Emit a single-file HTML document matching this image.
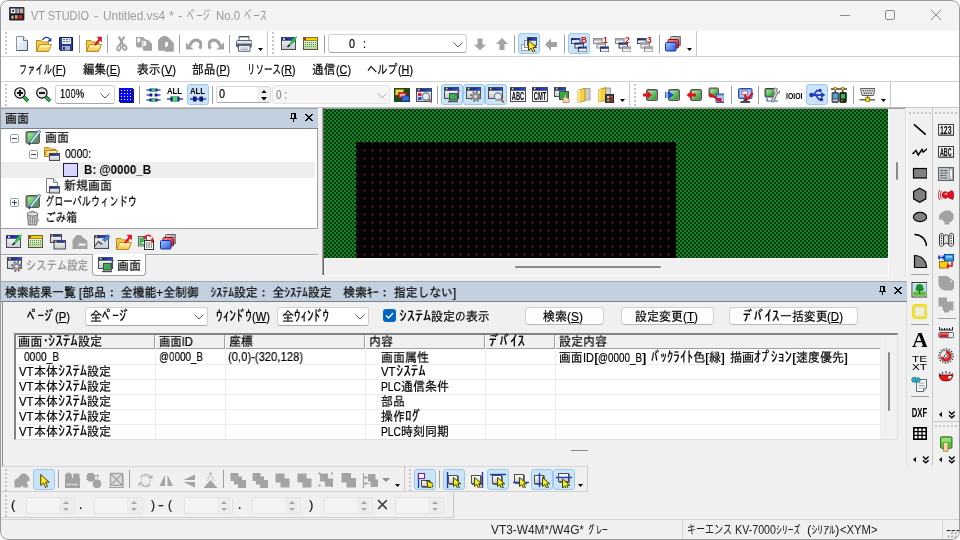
<!DOCTYPE html>
<html lang="ja"><head><meta charset="utf-8"><title>VT STUDIO</title>
<style>
html,body{margin:0;padding:0;background:#fff;}
#w{position:relative;width:960px;height:540px;overflow:hidden;background:#f0f0f0;font-family:"Liberation Sans","IPAGothic",sans-serif;font-size:12px;}
#w div,#w span.t,#w svg.i{position:absolute;box-sizing:border-box;}
#w span.t{white-space:pre;transform-origin:0 0;will-change:transform;}
#w span.s{display:inline-block;vertical-align:top;white-space:pre;}
#w span.s>span{display:inline-block;transform-origin:0 0;white-space:pre;}
#w u{text-decoration:underline;text-underline-offset:1px;}
.hl{background:#cce4f7;border:1px solid #99c9ef;border-radius:3px;}
.sep{background:#a0a0a0;width:1px;}
</style></head><body><svg width="0" height="0" style="position:absolute"><defs>
<linearGradient id="gFold" x1="0" y1="0" x2="0" y2="1"><stop offset="0" stop-color="#fff8c0"/><stop offset="1" stop-color="#f0c040"/></linearGradient>
<linearGradient id="gDoc" x1="0" y1="0" x2="1" y2="1"><stop offset="0" stop-color="#ffffff"/><stop offset="1" stop-color="#c8d8ec"/></linearGradient>
<linearGradient id="gWin" x1="0" y1="0" x2="0" y2="1"><stop offset="0" stop-color="#ffffff"/><stop offset="1" stop-color="#c4c8cc"/></linearGradient>
<linearGradient id="gNavy" x1="0" y1="0" x2="1" y2="0"><stop offset="0" stop-color="#0a1a7a"/><stop offset="1" stop-color="#2a50c8"/></linearGradient>
<linearGradient id="gGreen" x1="0" y1="0" x2="1" y2="1"><stop offset="0" stop-color="#b8f0a0"/><stop offset="1" stop-color="#18a028"/></linearGradient>
<linearGradient id="gBlue" x1="0" y1="0" x2="1" y2="1"><stop offset="0" stop-color="#a8c8ff"/><stop offset="1" stop-color="#2858d8"/></linearGradient>
<linearGradient id="gRed" x1="0" y1="0" x2="1" y2="1"><stop offset="0" stop-color="#ff9090"/><stop offset="1" stop-color="#d01028"/></linearGradient>
<linearGradient id="gGray" x1="0" y1="0" x2="1" y2="1"><stop offset="0" stop-color="#d8d8d8"/><stop offset="1" stop-color="#808080"/></linearGradient>
<linearGradient id="gCalBody" x1="0" y1="0" x2="0" y2="1"><stop offset="0" stop-color="#f4fae8"/><stop offset="1" stop-color="#b8d8a0"/></linearGradient>
</defs></svg><div id="w">
<div style="left:0px;top:0px;width:960px;height:30px;background:#f3f3f3;"></div>
<div style="left:0px;top:30px;width:960px;height:78px;background:#fff;"></div>
<div style="left:0px;top:30px;width:960px;height:1px;background:#f9f9f9;"></div>
<div style="left:0px;top:56px;width:960px;height:1px;background:#d0d0d0;"></div>
<div style="left:0px;top:81px;width:960px;height:1px;background:#d0d0d0;"></div>
<div style="left:0px;top:107px;width:960px;height:1px;background:#c8c8c8;"></div>
<svg class="i" style="left:9.3px;top:7px;" width="15.5" height="13.5" viewBox="0 0 17 15"><rect x="0" y="0" width="17" height="15" rx="1" fill="#2a2e3a"/><rect x="1" y="1" width="15" height="6.5" fill="#3a4254"/><rect x="2" y="1.8" width="5" height="5" fill="#f4f4f4"/><rect x="3.5" y="3.2" width="2" height="2.2" fill="#181818"/><rect x="8.2" y="1.8" width="3" height="5" fill="#9ab4c8"/><rect x="12" y="1.8" width="3.5" height="5" fill="#c8a890"/><rect x="1" y="8" width="15" height="6" fill="#14141a"/><rect x="2.5" y="9.5" width="2.5" height="3.5" fill="#c8c0b0"/><rect x="6.5" y="9" width="3" height="4" fill="#e09848"/><rect x="10.5" y="9" width="4" height="4" fill="#c82830"/></svg>
<span class="t" style="left:31px;top:9.5px;line-height:12.5px;height:12.5px;color:#9b9b9b;font-family:'Liberation Sans','Noto Sans CJK JP',sans-serif;font-size:12.5px;font-weight:normal;"><span class="s" style="width:58px"><span style="transform:scaleX(0.8728);">VT STUDIO</span></span><span class="s" style="width:4.5px"><span style=""> </span></span><span class="s" style="width:4.5px"><span style="transform:scaleX(1.0787);">-</span></span><span class="s" style="width:4.5px"><span style=""> </span></span><span class="s" style="width:62px"><span style="transform:scaleX(0.9493);">Untitled.vs4</span></span><span class="s" style="width:4.5px"><span style=""> </span></span><span class="s" style="width:5px"><span style="transform:scaleX(1.0256);">*</span></span><span class="s" style="width:4px"><span style=""> </span></span><span class="s" style="width:4.5px"><span style="transform:scaleX(1.0787);">-</span></span><span class="s" style="width:4px"><span style=""> </span></span><span class="s" style="width:25px"><span style="transform:scaleX(1.0499);">ﾍ<span style="margin-left:-0.2em;margin-right:-0.1em">ﾟ</span>ｰｼ<span style="margin-left:-0.2em;margin-right:-0.1em">ﾞ</span></span></span><span class="s" style="width:4px"><span style=""> </span></span><span class="s" style="width:24px"><span style="transform:scaleX(0.9089);">No.0</span></span><span class="s" style="width:4.5px"><span style=""> </span></span><span class="s" style="width:22.5px"><span style="transform:scaleX(1.0565);">ﾍ<span style="margin-left:-0.2em;margin-right:-0.1em">ﾞ</span>ｰｽ</span></span></span>
<div style="left:840px;top:15px;width:10px;height:1px;background:#8a8a8a;"></div>
<svg class="i" style="left:884px;top:9px;" width="12" height="12" viewBox="0 0 12 12"><rect x="1.5" y="1.5" width="9" height="9" rx="1.5" fill="none" stroke="#8a8a8a" stroke-width="1"/></svg>
<svg class="i" style="left:930px;top:9px;" width="12" height="12" viewBox="0 0 12 12"><path d="M1 1L11 11M11 1L1 11" stroke="#8a8a8a" stroke-width="1"/></svg>
<div style="left:5px;top:32px;width:2px;height:2px;background:#c6c6c6;"></div>
<div style="left:5px;top:36px;width:2px;height:2px;background:#c6c6c6;"></div>
<div style="left:5px;top:40px;width:2px;height:2px;background:#c6c6c6;"></div>
<div style="left:5px;top:44px;width:2px;height:2px;background:#c6c6c6;"></div>
<div style="left:5px;top:48px;width:2px;height:2px;background:#c6c6c6;"></div>
<div style="left:5px;top:52px;width:2px;height:2px;background:#c6c6c6;"></div>
<svg class="i" style="left:14px;top:36px;" width="16" height="16" viewBox="0 0 16 16"><path d="M2.5 0.5H9.5L13.5 4.5V14.5H2.5Z" fill="url(#gDoc)" stroke="#8c92a0"/><path d="M9.5 0.5V4.5H13.5" fill="#e8eef8" stroke="#70788a"/><path d="M2.5 14.5H13.5V5" fill="none" stroke="#505868" stroke-width="1"/></svg>
<svg class="i" style="left:36px;top:36px;" width="16" height="16" viewBox="0 0 16 16"><g transform="translate(0,1)"><path d="M0.5 14.5V3.5H5L6.5 5H12.5V7.5" fill="#f4cc48" stroke="#b88c20"/><path d="M0.5 14.5L3.5 7.5H15.5L12.5 14.5Z" fill="url(#gFold)" stroke="#b88c20"/></g><path d="M6.5 4C8 1 11.5 0.5 13.5 3" fill="none" stroke="#1838a0" stroke-width="1.3"/><path d="M15.3 1.5V5.5H11.3Z" fill="#1838a0"/></svg>
<svg class="i" style="left:58px;top:36px;" width="16" height="16" viewBox="0 0 16 16"><path d="M1.5 1.5H14.5V14.5H2.5L1.5 13.5Z" fill="#2a3a90" stroke="#101860"/><rect x="4" y="2" width="9" height="6" fill="#e8ecf0"/><path d="M5 3.5H12M5 5.5H12" stroke="#687088" stroke-width="1" stroke-dasharray="2 1"/><rect x="4" y="10" width="8" height="4.5" fill="#a8b0c0"/><rect x="5" y="11" width="2" height="3" fill="#2a3a90"/></svg>
<div style="left:79px;top:35px;width:1px;height:18px;background:#a0a0a0;"></div>
<svg class="i" style="left:86px;top:36px;" width="16" height="16" viewBox="0 0 16 16"><g transform="translate(0,1)"><path d="M0.5 14.5V3.5H5L6.5 5H12.5V7.5" fill="#f4cc48" stroke="#b88c20"/><path d="M0.5 14.5L3.5 7.5H15.5L12.5 14.5Z" fill="url(#gFold)" stroke="#b88c20"/></g><path d="M9 9L13.5 3.5" stroke="#e01020" stroke-width="2"/><path d="M10.5 0.8H15.8V6.5Z" fill="#e01020"/></svg>
<div style="left:107px;top:35px;width:1px;height:18px;background:#a0a0a0;"></div>
<svg class="i" style="left:114px;top:36px;" width="16" height="16" viewBox="0 0 16 16"><path d="M4.8 0.5L9.8 10M10.2 0.5L5.2 10" stroke="#a3a3a3" stroke-width="2.2" fill="none"/><ellipse cx="5" cy="12" rx="1.6" ry="2.6" fill="none" stroke="#a3a3a3" stroke-width="1.8" transform="rotate(15 5 12)"/><ellipse cx="10.6" cy="11.6" rx="1.8" ry="2.4" fill="none" stroke="#a3a3a3" stroke-width="1.8" transform="rotate(-25 10.6 11.6)"/></svg>
<svg class="i" style="left:136px;top:36px;" width="16" height="16" viewBox="0 0 16 16"><path d="M0 1H7L10 4V10L8 11.5H1.5L0 10Z" fill="#a3a3a3"/><path d="M1.2 2H4.2V6L1.2 6.5Z" fill="#f4f4f4"/><path d="M6.3 3.7H12L16 7.7V14.7H7.5L6.3 13Z" fill="#a3a3a3"/><path d="M6.3 3.7V13L7.5 14.7" stroke="#fff" stroke-width="0.7" fill="none"/><path d="M7.3 5H10.3V9.2L7.3 10.5Z" fill="#f4f4f4"/></svg>
<svg class="i" style="left:158px;top:36px;" width="16" height="16" viewBox="0 0 16 16"><path d="M0 4L3 1L5.5 0H8L10.5 1.5L15.8 7V15.7H7.5L6.5 14.7H1L0 13.5Z" fill="#a3a3a3"/><path d="M7 6H10V10L7 11.2Z" fill="#f4f4f4"/></svg>
<div style="left:179px;top:35px;width:1px;height:18px;background:#a0a0a0;"></div>
<svg class="i" style="left:186px;top:36px;" width="16" height="16" viewBox="0 0 16 16"><path d="M13.6 12.6C16.2 9 15 4.2 10 4.2C7 4.2 5 6.5 3.6 10" fill="none" stroke="#a3a3a3" stroke-width="3.2"/><path d="M0 6.5V13.6H7.6Z" fill="#a3a3a3"/></svg>
<svg class="i" style="left:208px;top:36px;" width="16" height="16" viewBox="0 0 16 16"><g transform="translate(16,0) scale(-1,1)"><path d="M13.6 12.6C16.2 9 15 4.2 10 4.2C7 4.2 5 6.5 3.6 10" fill="none" stroke="#a3a3a3" stroke-width="3.2"/><path d="M0 6.5V13.6H7.6Z" fill="#a3a3a3"/></g></svg>
<div style="left:229px;top:35px;width:1px;height:18px;background:#a0a0a0;"></div>
<svg class="i" style="left:236px;top:36px;" width="16" height="16" viewBox="0 0 16 16"><path d="M3 0.5H13V4.5H3Z" fill="#fafcff" stroke="#586070"/><path d="M3 0.8H13" stroke="#384048" stroke-width="1"/><rect x="0.5" y="4.5" width="15.5" height="6.5" rx="1" fill="#dfe6ee" stroke="#5c6878"/><rect x="1" y="7.5" width="14.5" height="3.5" fill="#566274"/><path d="M2.5 9.5H14V15.3H2.5Z" fill="#f4f6fa" stroke="#586070"/><path d="M4.5 12H12M4.5 13.6H12" stroke="#a0a8b4" stroke-width="0.9"/></svg>
<svg class="i" style="left:258px;top:48px;" width="5" height="3" viewBox="0 0 5 3"><path d="M0 0H5L2.5 3Z" fill="#000"/></svg>
<div style="left:267px;top:31px;width:1px;height:26px;background:#c8c8c8;"></div>
<div style="left:272px;top:32px;width:2px;height:2px;background:#c6c6c6;"></div>
<div style="left:272px;top:36px;width:2px;height:2px;background:#c6c6c6;"></div>
<div style="left:272px;top:40px;width:2px;height:2px;background:#c6c6c6;"></div>
<div style="left:272px;top:44px;width:2px;height:2px;background:#c6c6c6;"></div>
<div style="left:272px;top:48px;width:2px;height:2px;background:#c6c6c6;"></div>
<div style="left:272px;top:52px;width:2px;height:2px;background:#c6c6c6;"></div>
<svg class="i" style="left:281px;top:36px;" width="16" height="16" viewBox="0 0 16 16"><rect x="0.5" y="1.5" width="14" height="12" fill="url(#gWin)" stroke="#484c58"/><rect x="0.5" y="1.5" width="14" height="3" fill="url(#gNavy)" stroke="#484c58" stroke-width="0.6"/><rect x="2" y="2.2" width="2" height="1.6" fill="#e8e8ff"/><path d="M16 0L14.5 5L9.5 9.5L8 8.5L11.5 3Z" fill="#18a838"/><path d="M16 0L12 5L9 9" stroke="#70e088" stroke-width="0.8" fill="none"/><path d="M8.8 8.8L6.5 11" stroke="#101010" stroke-width="1.6"/></svg>
<svg class="i" style="left:303px;top:36px;" width="16" height="16" viewBox="0 0 16 16"><rect x="0.5" y="1.5" width="14" height="12" fill="url(#gCalBody)" stroke="#5c5430"/><rect x="0.5" y="1.5" width="14" height="3" fill="#f4d400" stroke="#5c5430" stroke-width="0.6"/><rect x="1" y="2" width="2" height="2" fill="#b03000"/><g shape-rendering="crispEdges"><rect x="2" y="6" width="1" height="1" fill="#4c9040"/><rect x="4" y="6" width="1" height="1" fill="#4c9040"/><rect x="6" y="6" width="1" height="1" fill="#4c9040"/><rect x="8" y="6" width="1" height="1" fill="#4c9040"/><rect x="10" y="6" width="1" height="1" fill="#4c9040"/><rect x="12" y="6" width="1" height="1" fill="#4c9040"/><rect x="2" y="8" width="1" height="1" fill="#4c9040"/><rect x="4" y="8" width="1" height="1" fill="#4c9040"/><rect x="6" y="8" width="1" height="1" fill="#4c9040"/><rect x="8" y="8" width="1" height="1" fill="#4c9040"/><rect x="10" y="8" width="1" height="1" fill="#4c9040"/><rect x="12" y="8" width="1" height="1" fill="#4c9040"/><rect x="2" y="10" width="1" height="1" fill="#4c9040"/><rect x="4" y="10" width="1" height="1" fill="#4c9040"/><rect x="6" y="10" width="1" height="1" fill="#4c9040"/><rect x="8" y="10" width="1" height="1" fill="#4c9040"/><rect x="10" y="10" width="1" height="1" fill="#4c9040"/><rect x="12" y="10" width="1" height="1" fill="#4c9040"/></g></svg>
<div style="left:324px;top:35px;width:1px;height:18px;background:#a0a0a0;"></div>
<div style="left:328px;top:34px;width:139px;height:19px;background:#fff;border:1px solid #d0d0d0;border-bottom-color:#a8a8a8;border-radius:3px;"></div>
<span class="t" style="left:349px;top:36.7px;line-height:13px;height:13px;color:#000;font-family:'Liberation Sans','IPAGothic',sans-serif;font-size:13px;font-weight:normal;-webkit-text-stroke:0.2px currentColor;"><span class="s" style="width:6px"><span style="transform:scaleX(0.8294);">0</span></span><span class="s" style="width:7.5px"><span style=""> </span></span><span class="s" style="width:3px"><span style="transform:scaleX(0.8276);">:</span></span></span>
<svg class="i" style="left:453px;top:42px;" width="10" height="6" viewBox="0 0 10 6"><path d="M0.5 0.5L5 5L9.5 0.5" fill="none" stroke="#5a5a5a" stroke-width="1"/></svg>
<svg class="i" style="left:472px;top:36px;" width="16" height="16" viewBox="0 0 16 16"><g transform="translate(1,2.5)"><path d="M4.5 0H9.5V6H13L7 12L1 6H4.5Z" fill="#a3a3a3"/></g></svg>
<svg class="i" style="left:494px;top:36px;" width="16" height="16" viewBox="0 0 16 16"><g transform="translate(1,14) scale(1,-1)"><path d="M4.5 0H9.5V6H13L7 12L1 6H4.5Z" fill="#a3a3a3"/></g></svg>
<div style="left:514px;top:35px;width:1px;height:18px;background:#a0a0a0;"></div>
<div class="hl" style="left:518px;top:33px;width:22px;height:21px;"></div>
<svg class="i" style="left:521px;top:36px;" width="16" height="16" viewBox="0 0 16 16"><rect x="0.5" y="8.5" width="8" height="6" fill="#fff" stroke="#a0a0a8"/><rect x="3.5" y="4.5" width="8" height="7" fill="#eef" stroke="#8088a0"/><rect x="6.5" y="1.5" width="9" height="8" fill="url(#gWin)" stroke="#484c58"/><rect x="6.5" y="1.5" width="9" height="3" fill="url(#gNavy)" stroke="#484c58" stroke-width="0.6"/><g transform="translate(7,4)"><path d="M0.5 0.5V10.5L3 8.2L5 12.5L7 11.5L5 7.5H8.5Z" fill="#ffe820" stroke="#3a3000" stroke-width="0.9" stroke-linejoin="round"/></g></svg>
<svg class="i" style="left:543px;top:36px;" width="16" height="16" viewBox="0 0 16 16"><g transform="translate(14,1.5) rotate(90)"><path d="M4.5 0H9.5V6H13L7 12L1 6H4.5Z" fill="#a3a3a3"/></g></svg>
<div style="left:564px;top:35px;width:1px;height:18px;background:#a0a0a0;"></div>
<div class="hl" style="left:568px;top:33px;width:22px;height:21px;"></div>
<svg class="i" style="left:571px;top:36px;will-change:transform;" width="16" height="16" viewBox="0 0 16 16"><rect x="0.5" y="2.5" width="8.5" height="5" fill="#eceef2" stroke="#404858"/><rect x="0.5" y="2.5" width="8.5" height="1.6" fill="url(#gNavy)"/><rect x="4.0" y="7.0" width="8.5" height="5" fill="#eceef2" stroke="#404858"/><rect x="4.0" y="7.0" width="8.5" height="1.6" fill="url(#gNavy)"/><rect x="7.5" y="11.0" width="8.5" height="5" fill="#eceef2" stroke="#404858"/><rect x="7.5" y="11.0" width="8.5" height="1.6" fill="url(#gNavy)"/><text x="10" y="7" font-family="Liberation Sans,sans-serif" font-weight="bold" font-size="8.5" fill="#d01818">B</text></svg>
<svg class="i" style="left:593px;top:36px;will-change:transform;" width="16" height="16" viewBox="0 0 16 16"><rect x="0.5" y="2.5" width="8.5" height="5" fill="#eceef2" stroke="#888"/><rect x="0.5" y="2.5" width="8.5" height="1.6" fill="#b0b0b0" stroke="#888" stroke-width="0.5"/><rect x="4.0" y="7.0" width="8.5" height="5" fill="#eceef2" stroke="#888"/><rect x="4.0" y="7.0" width="8.5" height="1.6" fill="#b0b0b0" stroke="#888" stroke-width="0.5"/><rect x="7.5" y="11.0" width="8.5" height="5" fill="#eceef2" stroke="#404858"/><rect x="7.5" y="11.0" width="8.5" height="1.6" fill="url(#gNavy)" stroke="#404858" stroke-width="0.5"/><text x="10" y="7" font-family="Liberation Sans,sans-serif" font-weight="bold" font-size="8.5" fill="#d01818">1</text></svg>
<svg class="i" style="left:615px;top:36px;will-change:transform;" width="16" height="16" viewBox="0 0 16 16"><rect x="0.5" y="2.5" width="8.5" height="5" fill="#eceef2" stroke="#888"/><rect x="0.5" y="2.5" width="8.5" height="1.6" fill="#b0b0b0" stroke="#888" stroke-width="0.5"/><rect x="4.0" y="7.0" width="8.5" height="5" fill="#eceef2" stroke="#404858"/><rect x="4.0" y="7.0" width="8.5" height="1.6" fill="url(#gNavy)" stroke="#404858" stroke-width="0.5"/><rect x="7.5" y="11.0" width="8.5" height="5" fill="#eceef2" stroke="#888"/><rect x="7.5" y="11.0" width="8.5" height="1.6" fill="#b0b0b0" stroke="#888" stroke-width="0.5"/><text x="10" y="7" font-family="Liberation Sans,sans-serif" font-weight="bold" font-size="8.5" fill="#d01818">2</text></svg>
<svg class="i" style="left:637px;top:36px;will-change:transform;" width="16" height="16" viewBox="0 0 16 16"><rect x="0.5" y="2.5" width="8.5" height="5" fill="#eceef2" stroke="#404858"/><rect x="0.5" y="2.5" width="8.5" height="1.6" fill="url(#gNavy)" stroke="#404858" stroke-width="0.5"/><rect x="4.0" y="7.0" width="8.5" height="5" fill="#eceef2" stroke="#888"/><rect x="4.0" y="7.0" width="8.5" height="1.6" fill="#b0b0b0" stroke="#888" stroke-width="0.5"/><rect x="7.5" y="11.0" width="8.5" height="5" fill="#eceef2" stroke="#888"/><rect x="7.5" y="11.0" width="8.5" height="1.6" fill="#b0b0b0" stroke="#888" stroke-width="0.5"/><text x="10" y="7" font-family="Liberation Sans,sans-serif" font-weight="bold" font-size="8.5" fill="#d01818">3</text></svg>
<div style="left:659px;top:35px;width:1px;height:18px;background:#a0a0a0;"></div>
<svg class="i" style="left:665px;top:36px;" width="16" height="16" viewBox="0 0 16 16"><rect x="5.5" y="0.5" width="10.5" height="9" rx="1" fill="url(#gGray)" stroke="#606060"/><rect x="3" y="3.5" width="10.5" height="8.5" rx="1" fill="url(#gRed)" stroke="#901020"/><rect x="0.5" y="6.5" width="10.5" height="8.5" rx="1" fill="url(#gBlue)" stroke="#1830a0"/></svg>
<svg class="i" style="left:687px;top:48px;" width="5" height="3" viewBox="0 0 5 3"><path d="M0 0H5L2.5 3Z" fill="#000"/></svg>
<div style="left:696px;top:31px;width:1px;height:26px;background:#c8c8c8;"></div>
<span class="t" style="left:19px;top:62.5px;line-height:13px;height:13px;color:#000;font-family:'Liberation Sans','IPAGothic',sans-serif;font-size:13px;font-weight:normal;-webkit-text-stroke:0.2px currentColor;"><span class="s" style="width:33px"><span style="transform:scaleX(0.6346);">ファイル</span></span><span class="s" style="width:14px"><span style="transform:scaleX(0.8413);">(<u>F</u>)</span></span></span>
<span class="t" style="left:83px;top:62.5px;line-height:13px;height:13px;color:#000;font-family:'Liberation Sans','IPAGothic',sans-serif;font-size:13px;font-weight:normal;-webkit-text-stroke:0.2px currentColor;"><span class="s" style="width:23px"><span style="transform:scaleX(0.8846);">編集</span></span><span class="s" style="width:14.5px"><span style="transform:scaleX(0.8353);">(<u>E</u>)</span></span></span>
<span class="t" style="left:137px;top:62.5px;line-height:13px;height:13px;color:#000;font-family:'Liberation Sans','IPAGothic',sans-serif;font-size:13px;font-weight:normal;-webkit-text-stroke:0.2px currentColor;"><span class="s" style="width:23.5px"><span style="transform:scaleX(0.9038);">表示</span></span><span class="s" style="width:15px"><span style="transform:scaleX(0.8641);">(<u>V</u>)</span></span></span>
<span class="t" style="left:192px;top:62.5px;line-height:13px;height:13px;color:#000;font-family:'Liberation Sans','IPAGothic',sans-serif;font-size:13px;font-weight:normal;-webkit-text-stroke:0.2px currentColor;"><span class="s" style="width:23.5px"><span style="transform:scaleX(0.9038);">部品</span></span><span class="s" style="width:14px"><span style="transform:scaleX(0.8065);">(<u>P</u>)</span></span></span>
<span class="t" style="left:247px;top:62.5px;line-height:13px;height:13px;color:#000;font-family:'Liberation Sans','IPAGothic',sans-serif;font-size:13px;font-weight:normal;-webkit-text-stroke:0.2px currentColor;"><span class="s" style="width:34px"><span style="transform:scaleX(0.6538);">リソース</span></span><span class="s" style="width:14.5px"><span style="transform:scaleX(0.8021);">(<u>R</u>)</span></span></span>
<span class="t" style="left:312px;top:62.5px;line-height:13px;height:13px;color:#000;font-family:'Liberation Sans','IPAGothic',sans-serif;font-size:13px;font-weight:normal;-webkit-text-stroke:0.2px currentColor;"><span class="s" style="width:23.5px"><span style="transform:scaleX(0.9038);">通信</span></span><span class="s" style="width:15px"><span style="transform:scaleX(0.8297);">(<u>C</u>)</span></span></span>
<span class="t" style="left:367px;top:62.5px;line-height:13px;height:13px;color:#000;font-family:'Liberation Sans','IPAGothic',sans-serif;font-size:13px;font-weight:normal;-webkit-text-stroke:0.2px currentColor;"><span class="s" style="width:30.5px"><span style="transform:scaleX(0.7821);">ヘルプ</span></span><span class="s" style="width:15px"><span style="transform:scaleX(0.8297);">(<u>H</u>)</span></span></span>
<div style="left:5px;top:84px;width:2px;height:2px;background:#c6c6c6;"></div>
<div style="left:5px;top:88px;width:2px;height:2px;background:#c6c6c6;"></div>
<div style="left:5px;top:92px;width:2px;height:2px;background:#c6c6c6;"></div>
<div style="left:5px;top:96px;width:2px;height:2px;background:#c6c6c6;"></div>
<div style="left:5px;top:100px;width:2px;height:2px;background:#c6c6c6;"></div>
<div style="left:5px;top:104px;width:2px;height:2px;background:#c6c6c6;"></div>
<svg class="i" style="left:14px;top:87px;" width="16" height="16" viewBox="0 0 16 16"><path d="M10 10L14 14" stroke="#0a5010" stroke-width="3.6" stroke-linecap="butt"/><path d="M10.3 10.3L13.7 13.7" stroke="#28c040" stroke-width="2"/><circle cx="5.9" cy="5.9" r="5.2" fill="#e4e4e4" stroke="#000" stroke-width="1.1"/><path d="M3 6H9" stroke="#000" stroke-width="1.8"/><path d="M6 3V9" stroke="#000" stroke-width="1.8"/></svg>
<svg class="i" style="left:36px;top:87px;" width="16" height="16" viewBox="0 0 16 16"><path d="M10 10L14 14" stroke="#0a5010" stroke-width="3.6" stroke-linecap="butt"/><path d="M10.3 10.3L13.7 13.7" stroke="#28c040" stroke-width="2"/><circle cx="5.9" cy="5.9" r="5.2" fill="#e4e4e4" stroke="#000" stroke-width="1.1"/><path d="M3 6H9" stroke="#000" stroke-width="1.8"/></svg>
<div style="left:55px;top:85px;width:60px;height:19px;background:#fff;border:1px solid #d0d0d0;border-bottom-color:#a8a8a8;border-radius:3px;"></div>
<span class="t" style="left:60px;top:87.0px;line-height:13px;color:#000;font-family:'Liberation Sans','IPAGothic',sans-serif;font-size:13px;font-weight:normal;-webkit-text-stroke:0.2px currentColor;transform:scaleX(0.7218);">100%</span>
<svg class="i" style="left:100px;top:93px;" width="10" height="6" viewBox="0 0 10 6"><path d="M0.5 0.5L5 5L9.5 0.5" fill="none" stroke="#5a5a5a" stroke-width="1"/></svg>
<svg class="i" style="left:119px;top:87px;" width="16" height="16" viewBox="0 0 16 16"><g shape-rendering="crispEdges"><rect x="1" y="2" width="14" height="14" fill="#181838"/><rect x="0" y="1" width="14" height="14" fill="#0808e8"/><rect x="2" y="3" width="1" height="1" fill="#fff"/><rect x="2" y="6" width="1" height="1" fill="#fff"/><rect x="2" y="9" width="1" height="1" fill="#fff"/><rect x="2" y="12" width="1" height="1" fill="#fff"/><rect x="5" y="3" width="1" height="1" fill="#fff"/><rect x="5" y="6" width="1" height="1" fill="#fff"/><rect x="5" y="9" width="1" height="1" fill="#fff"/><rect x="5" y="12" width="1" height="1" fill="#fff"/><rect x="8" y="3" width="1" height="1" fill="#fff"/><rect x="8" y="6" width="1" height="1" fill="#fff"/><rect x="8" y="9" width="1" height="1" fill="#fff"/><rect x="8" y="12" width="1" height="1" fill="#fff"/><rect x="11" y="3" width="1" height="1" fill="#fff"/><rect x="11" y="6" width="1" height="1" fill="#fff"/><rect x="11" y="9" width="1" height="1" fill="#fff"/><rect x="11" y="12" width="1" height="1" fill="#fff"/></g></svg>
<div style="left:139px;top:86px;width:1px;height:18px;background:#a0a0a0;"></div>
<svg class="i" style="left:145px;top:87px;" width="16" height="16" viewBox="0 0 16 16"><g transform="translate(0.5,0)"><path d="M1 3H15" stroke="#1020c0" stroke-width="1.2"/><rect x="4" y="1.5" width="8" height="3" fill="#102090"/><rect x="6" y="1.5" width="4" height="3" fill="#40d060"/><path d="M1 8H15" stroke="#1020c0" stroke-width="1.2"/><rect x="4" y="6.5" width="3" height="3" fill="#102090"/><rect x="9" y="6.5" width="3" height="3" fill="#102090"/><rect x="7" y="6.5" width="2" height="3" fill="#fff"/><path d="M1 13H15" stroke="#1020c0" stroke-width="1.2"/><rect x="4" y="11.5" width="8" height="3" fill="#102090"/><rect x="6" y="11.5" width="4" height="3" fill="#40d060"/></g></svg>
<svg class="i" style="left:167px;top:87px;will-change:transform;" width="16" height="16" viewBox="0 0 16 16"><text x="0" y="7" font-family="Liberation Sans,sans-serif" font-weight="bold" font-size="8.2" fill="#000" textLength="15" lengthAdjust="spacingAndGlyphs">ALL</text><path d="M0 12H16" stroke="#1020c0" stroke-width="1.3"/><rect x="3.5" y="9.5" width="9" height="5" fill="#102080"/><rect x="5.5" y="9.5" width="5" height="5" fill="#48d868"/></svg>
<div class="hl" style="left:187px;top:84px;width:22px;height:21px;"></div>
<svg class="i" style="left:190px;top:87px;will-change:transform;" width="16" height="16" viewBox="0 0 16 16"><text x="0" y="7" font-family="Liberation Sans,sans-serif" font-weight="bold" font-size="8.2" fill="#000" textLength="15" lengthAdjust="spacingAndGlyphs">ALL</text><path d="M0 12H16" stroke="#1020c0" stroke-width="1.3"/><rect x="3" y="9.5" width="3.6" height="5" fill="#101878"/><rect x="9.4" y="9.5" width="3.6" height="5" fill="#101878"/></svg>
<div style="left:212px;top:86px;width:1px;height:18px;background:#a0a0a0;"></div>
<div style="left:216px;top:86px;width:55px;height:17px;background:#fff;border:1px solid #d8d8d8;border-bottom-color:#a8a8a8;border-radius:3px;"></div>
<span class="t" style="left:219px;top:87.0px;line-height:13px;color:#000;font-family:'Liberation Sans','IPAGothic',sans-serif;font-size:13px;font-weight:normal;-webkit-text-stroke:0.2px currentColor;transform:scaleX(0.8294);">0</span>
<div style="left:257px;top:87px;width:13px;height:15px;background:#f0f0f0;"></div>
<svg class="i" style="left:261px;top:89.5px;" width="6" height="3.5" viewBox="0 0 6 3.5"><path d="M0 3.5H6L3 0Z" fill="#000"/></svg>
<svg class="i" style="left:261px;top:97px;" width="6" height="3.5" viewBox="0 0 6 3.5"><path d="M0 0H6L3 3.5Z" fill="#000"/></svg>
<div style="left:272px;top:85px;width:118px;height:19px;background:#f6f6f6;border:1px solid #e4e4e4;border-radius:3px;"></div>
<span class="t" style="left:276px;top:89.0px;line-height:12px;color:#8c8c8c;font-family:'Liberation Sans','IPAGothic',sans-serif;font-size:12px;font-weight:normal;-webkit-text-stroke:0.2px currentColor;transform:scaleX(0.8244);">0 :</span>
<svg class="i" style="left:377px;top:93px;" width="10" height="6" viewBox="0 0 10 6"><path d="M0.5 0.5L5 5L9.5 0.5" fill="none" stroke="#b0b0b0" stroke-width="1"/></svg>
<svg class="i" style="left:394px;top:87px;" width="16" height="16" viewBox="0 0 16 16"><rect x="0" y="1" width="16" height="14" fill="#1a4a1a"/><rect x="1.5" y="2.5" width="8" height="5.5" fill="#e8e030" stroke="#a09010" stroke-width="0.6"/><rect x="4.5" y="5.5" width="8" height="5.5" fill="#e82838" stroke="#901018" stroke-width="0.6"/><rect x="6" y="7" width="5" height="2.5" fill="#f8b0b0"/><rect x="8" y="9" width="7" height="5" fill="#3868e0" stroke="#1830a0" stroke-width="0.6"/></svg>
<svg class="i" style="left:416px;top:87px;" width="16" height="16" viewBox="0 0 16 16"><rect x="0.5" y="1.5" width="15" height="13" fill="url(#gWin)" stroke="#484c58"/><rect x="0.5" y="1.5" width="15" height="3" fill="url(#gNavy)" stroke="#484c58" stroke-width="0.6"/><rect x="1.8" y="1.8" width="1.8" height="1.8" fill="#f0d040"/><rect x="2" y="6" width="3.5" height="3" fill="#e02030"/><rect x="2" y="10" width="3.5" height="3" fill="#2850d8"/><g transform="translate(1.5,1)"><path d="M10.5 10.5L14.5 14.5" stroke="#a06850" stroke-width="2"/><circle cx="8.5" cy="8.5" r="3.6" fill="#e0ecf4" fill-opacity="0.9" stroke="#788088" stroke-width="1.2"/></g></svg>
<div style="left:437px;top:86px;width:1px;height:18px;background:#a0a0a0;"></div>
<div class="hl" style="left:441px;top:84px;width:22px;height:21px;"></div>
<div class="hl" style="left:463px;top:84px;width:22px;height:21px;"></div>
<div class="hl" style="left:485px;top:84px;width:22px;height:21px;"></div>
<svg class="i" style="left:444px;top:87px;" width="16" height="16" viewBox="0 0 16 16"><rect x="0.5" y="0.5" width="14" height="11" fill="url(#gWin)" stroke="#484c58"/><rect x="0.5" y="0.5" width="14" height="3" fill="url(#gNavy)" stroke="#484c58" stroke-width="0.6"/><rect x="1.8" y="0.8" width="1.8" height="1.8" fill="#f0d040"/><rect x="5.5" y="6.5" width="8" height="6.5" fill="#30b848" stroke="#404840"/><path d="M4 14.5H14" stroke="#505050" stroke-width="1.4"/><path d="M15.5 3L11 11L9.5 12.5L10 10.5Z" fill="#c0d8f0" stroke="#405878" stroke-width="0.7"/></svg>
<svg class="i" style="left:466px;top:87px;" width="16" height="16" viewBox="0 0 16 16"><rect x="0.5" y="0.5" width="14" height="11" fill="url(#gWin)" stroke="#484c58"/><rect x="0.5" y="0.5" width="14" height="3" fill="url(#gNavy)" stroke="#484c58" stroke-width="0.6"/><rect x="1.8" y="0.8" width="1.8" height="1.8" fill="#f0d040"/><circle cx="9.5" cy="9.5" r="4.3" fill="none" stroke="#707070" stroke-width="2.4" stroke-dasharray="1.9 1.48"/><circle cx="9.5" cy="9.5" r="3.6" fill="#8c8c8c"/><circle cx="9.5" cy="9.5" r="1.4" fill="#ececec"/></svg>
<svg class="i" style="left:488px;top:87px;" width="16" height="16" viewBox="0 0 16 16"><rect x="0.5" y="0.5" width="14" height="11" fill="url(#gWin)" stroke="#484c58"/><rect x="0.5" y="0.5" width="14" height="3" fill="url(#gNavy)" stroke="#484c58" stroke-width="0.6"/><rect x="1.8" y="0.8" width="1.8" height="1.8" fill="#f0d040"/><g transform="translate(1.5,1)"><path d="M10.5 10.5L14.5 14.5" stroke="#a06850" stroke-width="2"/><circle cx="8.5" cy="8.5" r="3.6" fill="#e0ecf4" fill-opacity="0.9" stroke="#788088" stroke-width="1.2"/></g></svg>
<svg class="i" style="left:510px;top:87px;will-change:transform;" width="16" height="16" viewBox="0 0 16 16"><rect x="0.5" y="0.5" width="15" height="14" fill="#f4f4f4" stroke="#484c58"/><rect x="0.5" y="0.5" width="15" height="3" fill="url(#gNavy)" stroke="#484c58" stroke-width="0.6"/><rect x="1.8" y="0.8" width="1.8" height="1.8" fill="#f0d040"/><text x="1.8" y="13" font-family="Liberation Sans,sans-serif" font-weight="bold" font-size="11.5" fill="#000" textLength="12.4" lengthAdjust="spacingAndGlyphs">ABC</text></svg>
<svg class="i" style="left:532px;top:87px;will-change:transform;" width="16" height="16" viewBox="0 0 16 16"><rect x="0.5" y="0.5" width="15" height="14" fill="#f4f4f4" stroke="#484c58"/><rect x="0.5" y="0.5" width="15" height="3" fill="url(#gNavy)" stroke="#484c58" stroke-width="0.6"/><rect x="1.8" y="0.8" width="1.8" height="1.8" fill="#f0d040"/><text x="1.8" y="13" font-family="Liberation Sans,sans-serif" font-weight="bold" font-size="11.5" fill="#000" textLength="12.4" lengthAdjust="spacingAndGlyphs">CMT</text></svg>
<svg class="i" style="left:554px;top:87px;" width="16" height="16" viewBox="0 0 16 16"><rect x="0.5" y="0.5" width="11" height="9" fill="url(#gWin)" stroke="#484c58"/><rect x="0.5" y="0.5" width="11" height="3" fill="url(#gNavy)" stroke="#484c58" stroke-width="0.6"/><rect x="1.8" y="0.8" width="1.8" height="1.8" fill="#f0d040"/><rect x="5.5" y="4.5" width="9" height="8" fill="#28b040" stroke="#485048"/><path d="M9 15.5V11.5L10.5 10V7.5H12V10.5L15 11.5V15.5Z" fill="#f8d8b0" stroke="#a07040" stroke-width="0.7"/></svg>
<svg class="i" style="left:576px;top:87px;" width="16" height="16" viewBox="0 0 16 16"><path d="M7.5 1.5H14V13H8Z" fill="#d0d0c8" stroke="#909088" stroke-width="0.8"/><path d="M2 3.2L9 1.2V14L2 15.3Z" fill="#f6d040" stroke="#b08820" stroke-width="0.8"/><path d="M2 3.2L4 2.6V14.9L2 15.3Z" fill="#ffe880"/></svg>
<svg class="i" style="left:598px;top:87px;" width="16" height="16" viewBox="0 0 16 16"><g transform="translate(-1.5,-0.5)"><path d="M7.5 1.5H14V13H8Z" fill="#d0d0c8" stroke="#909088" stroke-width="0.8"/><path d="M2 3.2L9 1.2V14L2 15.3Z" fill="#f6d040" stroke="#b08820" stroke-width="0.8"/><path d="M2 3.2L4 2.6V14.9L2 15.3Z" fill="#ffe880"/></g><rect x="7.5" y="7.5" width="8.5" height="8" fill="#383838" stroke="#181818" stroke-width="0.8"/><rect x="9" y="9" width="2.4" height="2.2" fill="#c8c8c8"/><rect x="12.4" y="9" width="2.4" height="2.2" fill="#d04040"/><rect x="9" y="12.3" width="2.4" height="2.2" fill="#d0a040"/><rect x="12.4" y="12.3" width="2.4" height="2.2" fill="#c02020"/></svg>
<svg class="i" style="left:620px;top:99px;" width="5" height="3" viewBox="0 0 5 3"><path d="M0 0H5L2.5 3Z" fill="#000"/></svg>
<div style="left:629px;top:82px;width:1px;height:26px;background:#c8c8c8;"></div>
<div style="left:634px;top:84px;width:2px;height:2px;background:#c6c6c6;"></div>
<div style="left:634px;top:88px;width:2px;height:2px;background:#c6c6c6;"></div>
<div style="left:634px;top:92px;width:2px;height:2px;background:#c6c6c6;"></div>
<div style="left:634px;top:96px;width:2px;height:2px;background:#c6c6c6;"></div>
<div style="left:634px;top:100px;width:2px;height:2px;background:#c6c6c6;"></div>
<div style="left:634px;top:104px;width:2px;height:2px;background:#c6c6c6;"></div>
<svg class="i" style="left:642px;top:87px;" width="16" height="16" viewBox="0 0 16 16"><rect x="4.5" y="2.5" width="11" height="11" rx="1.5" fill="#888c88" stroke="#505450"/><rect x="6" y="4" width="8" height="8" fill="url(#gGreen)"/><path d="M1 6.5H5.5V4L10 8L5.5 12V9.5H1Z" fill="#e81020"/></svg>
<svg class="i" style="left:664px;top:87px;" width="16" height="16" viewBox="0 0 16 16"><rect x="4.5" y="2.5" width="11" height="11" rx="1.5" fill="#888c88" stroke="#505450"/><rect x="6" y="4" width="8" height="8" fill="url(#gGreen)"/><path d="M4.5 4L10 8L4.5 12Z" fill="#1850e0"/><path d="M1.5 5V11M3 5V11" stroke="#1850e0" stroke-width="0.9"/></svg>
<svg class="i" style="left:686px;top:87px;" width="16" height="16" viewBox="0 0 16 16"><rect x="4.5" y="2.5" width="11" height="11" rx="1.5" fill="#888c88" stroke="#505450"/><rect x="6" y="4" width="8" height="8" fill="url(#gGreen)"/><path d="M10 6.5H5.5V4L0.5 8L5.5 12V9.5H10Z" fill="#e81020"/></svg>
<svg class="i" style="left:708px;top:87px;" width="16" height="16" viewBox="0 0 16 16"><rect x="1" y="1" width="9.5" height="8.5" rx="1" fill="#888c88" stroke="#505450"/><rect x="2.5" y="2.5" width="6.5" height="5.5" fill="url(#gGreen)"/><rect x="8" y="7" width="9" height="8.5" rx="1" fill="#7090d0" stroke="#3050a0"/><rect x="9.5" y="8.5" width="6" height="5.5" fill="#a8c8ff"/><path d="M3.5 7.5L11.5 14" stroke="#e01020" stroke-width="2"/><path d="M1.5 5V10.5H7Z" fill="#e01020"/><path d="M13.5 16V11H8.5Z" fill="#e01020"/></svg>
<div style="left:731px;top:86px;width:1px;height:18px;background:#a0a0a0;"></div>
<svg class="i" style="left:737px;top:87px;" width="16" height="16" viewBox="0 0 16 16"><rect x="1.5" y="1.5" width="13.5" height="10" rx="1" fill="#6898e0" stroke="#3050a0"/><rect x="3" y="3" width="10.5" height="7" fill="#a8c8ff"/><rect x="6.5" y="12" width="3.5" height="2" fill="#404040"/><path d="M3.5 15H13" stroke="#202020" stroke-width="1.6"/><rect x="5" y="4" width="5.5" height="3.5" fill="#fff" stroke="#c03030" stroke-width="0.7"/><path d="M7.5 8L10.5 12L16 6" fill="none" stroke="#e01020" stroke-width="2.2"/></svg>
<div style="left:758px;top:86px;width:1px;height:18px;background:#a0a0a0;"></div>
<svg class="i" style="left:764px;top:87px;" width="16" height="16" viewBox="0 0 16 16"><rect x="1" y="1.5" width="10" height="8.5" rx="1" fill="#707870" stroke="#404840"/><rect x="2.5" y="3" width="6.5" height="5.5" fill="url(#gGreen)"/><path d="M3 11V14H14" fill="none" stroke="#3060c0" stroke-width="1.2"/><path d="M10 1.5C8.5 3 9 5 10.5 6L7.5 13.5C7 15 9 16 10 14.5L13 7C15 7 16.5 5.5 16 3.5L14 5.5L12.5 4.5L13.5 1.8C12.5 1 11 1 10 1.5Z" fill="#c8c8c8" stroke="#606060" stroke-width="0.8"/></svg>
<svg class="i" style="left:786px;top:87px;will-change:transform;" width="16" height="16" viewBox="0 0 16 16"><text x="0" y="12" font-family="Liberation Sans,sans-serif" font-weight="bold" font-size="9.5" fill="#000" textLength="16.5" lengthAdjust="spacingAndGlyphs">IOIOI</text></svg>
<div class="hl" style="left:806px;top:84px;width:22px;height:21px;"></div>
<svg class="i" style="left:809px;top:87px;" width="16" height="16" viewBox="0 0 16 16"><path d="M1 8H14" stroke="#2038c0" stroke-width="1.8"/><path d="M12 5L16.5 8L12 11Z" fill="#2038c0"/><circle cx="2.5" cy="8" r="2.3" fill="#2038c0"/><path d="M4.5 8L8 3.5H10.5" fill="none" stroke="#2038c0" stroke-width="1.6"/><circle cx="11" cy="3.5" r="1.7" fill="#2038c0"/><path d="M6.5 8L10 12.5H11.5" fill="none" stroke="#2038c0" stroke-width="1.6"/><rect x="10.8" y="11" width="3.2" height="3.2" fill="#2038c0"/></svg>
<svg class="i" style="left:831px;top:87px;" width="16" height="16" viewBox="0 0 16 16"><path d="M0 2H16" stroke="#303030" stroke-width="1.4"/><rect x="3" y="0.5" width="2.5" height="2.5" fill="#e8d020" stroke="#706010" stroke-width="0.5"/><rect x="10.5" y="0.5" width="2.5" height="2.5" fill="#e8d020" stroke="#706010" stroke-width="0.5"/><path d="M4.2 3V6M11.8 3V6" stroke="#303030" stroke-width="1.2"/><rect x="1" y="5.5" width="6.5" height="10" rx="0.8" fill="#586878" stroke="#303840" stroke-width="0.8"/><rect x="2.3" y="7" width="4" height="4" fill="#50a8f0"/><rect x="2" y="12.5" width="4.5" height="1.6" fill="#c0c8d0"/><rect x="8.8" y="5.5" width="6.5" height="10" rx="0.8" fill="#282c28" stroke="#101010" stroke-width="0.8"/><rect x="10" y="7" width="4" height="4.5" fill="#30c048"/><rect x="10.3" y="13" width="1.4" height="1.4" fill="#e08020"/></svg>
<div style="left:853px;top:86px;width:1px;height:18px;background:#a0a0a0;"></div>
<svg class="i" style="left:859px;top:87px;" width="16" height="16" viewBox="0 0 16 16"><path d="M1.5 1.5H16L14.5 8.5H3Z" fill="#d8d8d8" stroke="#606060" stroke-width="1" stroke-linejoin="round"/><path d="M3.8 3.6H14M4.8 6.2H13" stroke="#505050" stroke-width="1.4" stroke-dasharray="1.2 1"/><path d="M8.7 8.5V11" stroke="#404040" stroke-width="1"/><path d="M0.5 12.8H17" stroke="#404040" stroke-width="1.2"/><rect x="6.7" y="10.5" width="4" height="4" fill="#f0d020" stroke="#807010" stroke-width="0.7"/></svg>
<svg class="i" style="left:881px;top:99px;" width="5" height="3" viewBox="0 0 5 3"><path d="M0 0H5L2.5 3Z" fill="#000"/></svg>
<div style="left:890px;top:82px;width:1px;height:26px;background:#c8c8c8;"></div>
<div style="left:0px;top:108px;width:318px;height:21px;background:#c3d0df;border-top:1px solid #a4a4a4;border-bottom:1px solid #7c8088;"></div>
<span class="t" style="left:5px;top:111.5px;line-height:13px;color:#000;font-family:'Liberation Sans','IPAGothic',sans-serif;font-size:13px;font-weight:normal;-webkit-text-stroke:0.2px currentColor;transform:scaleX(0.9231);">画面</span>
<svg class="i" style="left:290px;top:113px;" width="7" height="9" viewBox="0 0 7 9"><g shape-rendering="crispEdges" fill="#000"><rect x="1" y="0" width="5" height="1"/><rect x="1" y="0" width="1" height="5"/><rect x="4" y="0" width="2" height="5"/><rect x="0" y="5" width="7" height="1"/><rect x="3" y="6" width="1" height="3"/></g></svg>
<svg class="i" style="left:305px;top:114px;" width="8" height="7" viewBox="0 0 8 7"><g shape-rendering="crispEdges" fill="#000"><rect x="0" y="0" width="2" height="1"/><rect x="6" y="0" width="2" height="1"/><rect x="1" y="1" width="2" height="1"/><rect x="5" y="1" width="2" height="1"/><rect x="2" y="2" width="2" height="1"/><rect x="4" y="2" width="2" height="1"/><rect x="3" y="3" width="2" height="1"/><rect x="2" y="4" width="2" height="1"/><rect x="4" y="4" width="2" height="1"/><rect x="1" y="5" width="2" height="1"/><rect x="5" y="5" width="2" height="1"/><rect x="0" y="6" width="2" height="1"/><rect x="6" y="6" width="2" height="1"/></g></svg>
<div style="left:0px;top:129px;width:318px;height:100px;background:#fff;border-left:1px solid #8e9aaa;border-right:1px solid #a0a0a0;border-bottom:1px solid #a0a0a0;"></div>
<div style="left:1px;top:162px;width:314px;height:16px;background:#eeeeee;"></div>
<svg class="i" style="left:10px;top:134px;" width="9" height="9" viewBox="0 0 9 9"><rect x="0.5" y="0.5" width="8" height="8" fill="#fff" stroke="#9a9a9a" rx="1"/><path d="M2 4.5H7" stroke="#2c4a8c" stroke-width="1"/></svg>
<svg class="i" style="left:29px;top:150px;" width="9" height="9" viewBox="0 0 9 9"><rect x="0.5" y="0.5" width="8" height="8" fill="#fff" stroke="#9a9a9a" rx="1"/><path d="M2 4.5H7" stroke="#2c4a8c" stroke-width="1"/></svg>
<svg class="i" style="left:10px;top:198px;" width="9" height="9" viewBox="0 0 9 9"><rect x="0.5" y="0.5" width="8" height="8" fill="#fff" stroke="#9a9a9a" rx="1"/><path d="M2 4.5H7" stroke="#2c4a8c" stroke-width="1"/><path d="M4.5 2V7" stroke="#2c4a8c" stroke-width="1"/></svg>
<svg class="i" style="left:25px;top:130px;" width="16" height="16" viewBox="0 0 16 16"><rect x="1" y="1.5" width="13.5" height="12" rx="1.5" fill="#7c807c" stroke="#585c58"/><rect x="2.8" y="3.2" width="9.8" height="8.5" fill="url(#gGreen)"/><path d="M15 0.5L5.5 13" stroke="#4878b8" stroke-width="3"/><path d="M14.6 1.2L5.8 12.6" stroke="#e8f0fa" stroke-width="1.5"/><path d="M5.6 12.6L4 15.2" stroke="#2050a0" stroke-width="1.6"/></svg>
<span class="t" style="left:45px;top:130.8px;line-height:13px;color:#000;font-family:'Liberation Sans','IPAGothic',sans-serif;font-size:13px;font-weight:normal;-webkit-text-stroke:0.2px currentColor;transform:scaleX(0.9231);">画面</span>
<svg class="i" style="left:44px;top:146px;" width="16" height="16" viewBox="0 0 16 16"><path d="M0.5 10.5V1.5H5L6.5 3H11.5V6" fill="#f0c850" stroke="#b08820"/><path d="M0.5 10.5L2.5 4.5H13.5L12 10.5Z" fill="url(#gFold)" stroke="#b08820"/><rect x="5.5" y="7.5" width="10" height="7" fill="url(#gWin)" stroke="#484c58"/><rect x="5.5" y="7.5" width="10" height="2.2" fill="url(#gNavy)" stroke="#484c58" stroke-width="0.6"/></svg>
<span class="t" style="left:65px;top:146.5px;line-height:13px;color:#000;font-family:'Liberation Sans','IPAGothic',sans-serif;font-size:13px;font-weight:normal;-webkit-text-stroke:0.2px currentColor;transform:scaleX(0.7988);">0000:</span>
<div style="left:63px;top:163px;width:15px;height:14px;background:#d6d6ff;border:1px solid #202040;"></div>
<span class="t" style="left:84px;top:162.5px;line-height:13px;color:#000;font-family:'Liberation Sans','IPAGothic',sans-serif;font-size:13px;font-weight:bold;transform:scaleX(0.8869);">B: @0000_B</span>
<svg class="i" style="left:45px;top:178px;" width="16" height="16" viewBox="0 0 16 16"><path d="M1.5 0.5H8.5L12.5 4.5V14.5H1.5Z" fill="#fafafa" stroke="#808488"/><path d="M8.5 0.5V4.5H12.5" fill="#e0e4e8" stroke="#808488"/><rect x="4.5" y="8.5" width="10" height="6.5" fill="url(#gWin)" stroke="#484c58"/><rect x="4.5" y="8.5" width="10" height="2" fill="url(#gNavy)" stroke="#484c58" stroke-width="0.6"/></svg>
<span class="t" style="left:64px;top:178.8px;line-height:13px;color:#000;font-family:'Liberation Sans','IPAGothic',sans-serif;font-size:13px;font-weight:normal;-webkit-text-stroke:0.2px currentColor;transform:scaleX(0.9231);">新規画面</span>
<svg class="i" style="left:25px;top:194px;" width="16" height="16" viewBox="0 0 16 16"><rect x="1" y="1.5" width="13.5" height="12" rx="1.5" fill="#7c807c" stroke="#585c58"/><rect x="2.8" y="3.2" width="9.8" height="8.5" fill="url(#gGreen)"/><path d="M15 0.5L5.5 13" stroke="#4878b8" stroke-width="3"/><path d="M14.6 1.2L5.8 12.6" stroke="#e8f0fa" stroke-width="1.5"/><path d="M5.6 12.6L4 15.2" stroke="#2050a0" stroke-width="1.6"/></svg>
<span class="t" style="left:45px;top:194.8px;line-height:13px;color:#000;font-family:'Liberation Sans','IPAGothic',sans-serif;font-size:13px;font-weight:normal;-webkit-text-stroke:0.2px currentColor;transform:scaleX(0.7077);">グローバルウィンドウ</span>
<svg class="i" style="left:25px;top:210px;" width="16" height="16" viewBox="0 0 16 16"><path d="M2.5 4.5H12.5L11.5 15H3.5Z" fill="#c8c8c8" stroke="#707070"/><ellipse cx="7.5" cy="4" rx="5.5" ry="2" fill="#e0e0e0" stroke="#707070"/><path d="M5 6.5L5.5 13.5M7.5 6.5V13.5M10 6.5L9.5 13.5" stroke="#808080" stroke-width="0.9"/><path d="M5.5 2.2C6 0.8 9 0.8 9.5 2.2" fill="none" stroke="#707070"/><path d="M12.5 8C14 8.5 14 12 12 12.5" fill="#b0b0b0" stroke="#909090" stroke-width="0.6"/></svg>
<span class="t" style="left:45px;top:210.8px;line-height:13px;color:#000;font-family:'Liberation Sans','IPAGothic',sans-serif;font-size:13px;font-weight:normal;-webkit-text-stroke:0.2px currentColor;transform:scaleX(0.8205);">ごみ箱</span>
<svg class="i" style="left:6px;top:234px;" width="16" height="16" viewBox="0 0 16 16"><rect x="0.5" y="1.5" width="14" height="12" fill="url(#gWin)" stroke="#484c58"/><rect x="0.5" y="1.5" width="14" height="3" fill="url(#gNavy)" stroke="#484c58" stroke-width="0.6"/><rect x="2" y="2.2" width="2" height="1.6" fill="#e8e8ff"/><path d="M16 0L14.5 5L9.5 9.5L8 8.5L11.5 3Z" fill="#18a838"/><path d="M16 0L12 5L9 9" stroke="#70e088" stroke-width="0.8" fill="none"/><path d="M8.8 8.8L6.5 11" stroke="#101010" stroke-width="1.6"/></svg>
<svg class="i" style="left:28px;top:234px;" width="16" height="16" viewBox="0 0 16 16"><rect x="0.5" y="1.5" width="14" height="12" fill="url(#gCalBody)" stroke="#5c5430"/><rect x="0.5" y="1.5" width="14" height="3" fill="#f4d400" stroke="#5c5430" stroke-width="0.6"/><rect x="1" y="2" width="2" height="2" fill="#b03000"/><g shape-rendering="crispEdges"><rect x="2" y="6" width="1" height="1" fill="#4c9040"/><rect x="4" y="6" width="1" height="1" fill="#4c9040"/><rect x="6" y="6" width="1" height="1" fill="#4c9040"/><rect x="8" y="6" width="1" height="1" fill="#4c9040"/><rect x="10" y="6" width="1" height="1" fill="#4c9040"/><rect x="12" y="6" width="1" height="1" fill="#4c9040"/><rect x="2" y="8" width="1" height="1" fill="#4c9040"/><rect x="4" y="8" width="1" height="1" fill="#4c9040"/><rect x="6" y="8" width="1" height="1" fill="#4c9040"/><rect x="8" y="8" width="1" height="1" fill="#4c9040"/><rect x="10" y="8" width="1" height="1" fill="#4c9040"/><rect x="12" y="8" width="1" height="1" fill="#4c9040"/><rect x="2" y="10" width="1" height="1" fill="#4c9040"/><rect x="4" y="10" width="1" height="1" fill="#4c9040"/><rect x="6" y="10" width="1" height="1" fill="#4c9040"/><rect x="8" y="10" width="1" height="1" fill="#4c9040"/><rect x="10" y="10" width="1" height="1" fill="#4c9040"/><rect x="12" y="10" width="1" height="1" fill="#4c9040"/></g></svg>
<svg class="i" style="left:50px;top:234px;" width="16" height="16" viewBox="0 0 16 16"><rect x="0.5" y="0.5" width="11" height="8" fill="url(#gWin)" stroke="#484c58"/><rect x="0.5" y="0.5" width="11" height="2.2" fill="url(#gNavy)" stroke="#484c58" stroke-width="0.6"/><rect x="1.5" y="0.8" width="1.6" height="1.6" fill="#f0d040"/><rect x="4.0" y="6.5" width="11.5" height="8.5" fill="url(#gWin)" stroke="#484c58"/><rect x="4.0" y="6.5" width="11.5" height="2.2" fill="url(#gNavy)" stroke="#484c58" stroke-width="0.6"/><rect x="5" y="6.8" width="1.6" height="1.6" fill="#f0d040"/></svg>
<svg class="i" style="left:72px;top:234px;" width="16" height="16" viewBox="0 0 16 16"><path d="M0.5 6L3 3L4.5 1H9L10.5 3L15.5 7V15H0.5Z" fill="#a3a3a3"/><rect x="6.5" y="9.5" width="7" height="2.2" fill="#f0f0f0"/></svg>
<svg class="i" style="left:94px;top:234px;" width="16" height="16" viewBox="0 0 16 16"><rect x="0.5" y="1.5" width="14" height="13" fill="url(#gWin)" stroke="#484c58"/><rect x="0.5" y="1.5" width="14" height="2.4" fill="url(#gNavy)" stroke="#484c58" stroke-width="0.6"/><rect x="1.5" y="1.8" width="1.6" height="1.6" fill="#f0d040"/><path d="M1 12L4.5 7.5L7 10L9.5 7" fill="none" stroke="#404850" stroke-width="1.2"/><path d="M14 0.5L16 2.5L11 8L8.5 6Z" fill="#4880d0" stroke="#2050a0" stroke-width="0.6"/><path d="M8.5 6L11 8L9 10L6.8 8Z" fill="#f4f8ff" stroke="#8090a8" stroke-width="0.6"/></svg>
<svg class="i" style="left:116px;top:234px;" width="16" height="16" viewBox="0 0 16 16"><g transform="translate(0,1)"><path d="M0.5 14.5V3.5H5L6.5 5H12.5V7.5" fill="#f4cc48" stroke="#b88c20"/><path d="M0.5 14.5L3.5 7.5H15.5L12.5 14.5Z" fill="url(#gFold)" stroke="#b88c20"/></g><path d="M9 9L13.5 3.5" stroke="#e01020" stroke-width="2"/><path d="M10.5 0.8H15.8V6.5Z" fill="#e01020"/></svg>
<svg class="i" style="left:138px;top:234px;" width="16" height="16" viewBox="0 0 16 16"><rect x="0.5" y="2.5" width="8" height="9.5" fill="#f8f8f8" stroke="#606060"/><rect x="1.5" y="3.5" width="6" height="7.5" fill="#38b050"/><path d="M6.5 5V9H3.5" stroke="#e8ffe8" stroke-width="1.4" fill="none"/><rect x="6.5" y="6.5" width="9" height="9" fill="#fff" stroke="#303030"/><path d="M8 9H14M8 11H14M8 13H14" stroke="#404040" stroke-width="1" stroke-dasharray="1.5 0.8"/><path d="M6.5 4C7 1 11 0.5 13 2.5M14.5 3.5C14.8 5 14.5 6 13.5 7" fill="none" stroke="#e01828" stroke-width="1.5"/><path d="M4.5 2.5L8.5 2.5L6.8 6Z" fill="#e01828"/><path d="M11.5 6L15.5 5L14.8 9Z" fill="#e01828"/></svg>
<svg class="i" style="left:160px;top:234px;" width="16" height="16" viewBox="0 0 16 16"><rect x="5.5" y="0.5" width="10.5" height="9" rx="1" fill="url(#gGray)" stroke="#606060"/><rect x="3" y="3.5" width="10.5" height="8.5" rx="1" fill="url(#gRed)" stroke="#901020"/><rect x="0.5" y="6.5" width="10.5" height="8.5" rx="1" fill="url(#gBlue)" stroke="#1830a0"/></svg>
<div style="left:1px;top:254px;width:317px;height:1px;background:#a4a4a4;"></div>
<div style="left:1px;top:255px;width:317px;height:1px;background:#fcfcfc;"></div>
<svg class="i" style="left:7px;top:257px;" width="16" height="16" viewBox="0 0 16 16"><rect x="0.5" y="0.5" width="14" height="11" fill="url(#gWin)" stroke="#484c58"/><rect x="0.5" y="0.5" width="14" height="3" fill="url(#gNavy)" stroke="#484c58" stroke-width="0.6"/><rect x="1.8" y="0.8" width="1.8" height="1.8" fill="#f0d040"/><circle cx="9.5" cy="9.5" r="4.3" fill="none" stroke="#707070" stroke-width="2.4" stroke-dasharray="1.9 1.48"/><circle cx="9.5" cy="9.5" r="3.6" fill="#8c8c8c"/><circle cx="9.5" cy="9.5" r="1.4" fill="#ececec"/></svg>
<span class="t" style="left:26px;top:258.5px;line-height:13px;color:#8a8a8a;font-family:'Liberation Sans','IPAGothic',sans-serif;font-size:13px;font-weight:normal;-webkit-text-stroke:0.2px currentColor;transform:scaleX(0.7949);">システム設定</span>
<div style="left:92px;top:254px;width:54px;height:22px;background:#fff;border:1px solid #a0a0a0;border-top:none;border-radius:0 0 4px 4px;"></div>
<svg class="i" style="left:98px;top:257px;" width="16" height="16" viewBox="0 0 16 16"><rect x="0.5" y="0.5" width="14" height="11" fill="url(#gWin)" stroke="#484c58"/><rect x="0.5" y="0.5" width="14" height="3" fill="url(#gNavy)" stroke="#484c58" stroke-width="0.6"/><rect x="1.8" y="0.8" width="1.8" height="1.8" fill="#f0d040"/><rect x="5.5" y="6.5" width="8" height="6.5" fill="#30b848" stroke="#404840"/><path d="M4 14.5H14" stroke="#505050" stroke-width="1.4"/><path d="M15.5 3L11 11L9.5 12.5L10 10.5Z" fill="#c0d8f0" stroke="#405878" stroke-width="0.7"/></svg>
<span class="t" style="left:117px;top:258.5px;line-height:13px;color:#000;font-family:'Liberation Sans','IPAGothic',sans-serif;font-size:13px;font-weight:normal;-webkit-text-stroke:0.2px currentColor;transform:scaleX(0.9231);">画面</span>
<div style="left:322px;top:108px;width:567px;height:168px;background:#f0f0f0;"></div>
<div style="left:322px;top:107px;width:585px;height:1px;background:#b8b8b8;"></div>
<div style="left:322px;top:108px;width:585px;height:1px;background:#a0a0a0;"></div>
<div style="left:322px;top:108px;width:1px;height:168px;background:#a0a0a0;"></div>
<div style="left:323px;top:108px;width:1px;height:168px;background:#696969;"></div>
<div style="left:324px;top:258px;width:582px;height:1px;background:#fafafa;"></div>
<div style="left:322px;top:275px;width:585px;height:1px;background:#fff;"></div>
<svg class="i" style="left:324px;top:109px;shape-rendering:crispEdges;" width="564" height="149" viewBox="0 0 564 149"><defs><pattern id="pChk" x="0" y="1" width="4" height="4" patternUnits="userSpaceOnUse"><rect width="4" height="4" fill="#003c10"/><rect width="2" height="2" fill="#148228"/><rect x="2" y="2" width="2" height="2" fill="#148228"/></pattern><pattern id="pDotG" x="0" y="1" width="8" height="8" patternUnits="userSpaceOnUse"><rect width="2" height="2" fill="#466a2a"/></pattern><pattern id="pDotR" x="0" y="1" width="8" height="8" patternUnits="userSpaceOnUse"><rect width="1" height="1" fill="#8c4038"/><rect x="1" y="0" width="1" height="1" fill="#2c0606"/><rect x="7" y="0" width="1" height="1" fill="#2c0606"/><rect x="0" y="1" width="1" height="1" fill="#2c0606"/><rect x="0" y="7" width="1" height="1" fill="#2c0606"/><rect x="1" y="1" width="1" height="1" fill="#150202"/><rect x="7" y="7" width="1" height="1" fill="#150202"/><rect x="1" y="7" width="1" height="1" fill="#150202"/><rect x="7" y="1" width="1" height="1" fill="#150202"/></pattern></defs><rect width="564" height="149" fill="url(#pChk)"/><rect width="564" height="149" fill="url(#pDotG)"/><rect x="32" y="33" width="320" height="128" fill="#000"/><rect x="32" y="33" width="320" height="128" fill="url(#pDotR)"/></svg>
<div style="left:888px;top:109px;width:18px;height:167px;background:#f0f0f0;border-left:1px solid #fbfbfb;"></div>
<div style="left:896px;top:162px;width:2px;height:18px;background:#8a8a8a;border-radius:1px;"></div>
<div style="left:515px;top:266px;width:146px;height:2px;background:#8a8a8a;border-radius:1px;"></div>
<div style="left:905px;top:108px;width:27px;height:358px;background:#f0f0f0;border-left:1px solid #dcdcdc;"></div>
<div style="left:906px;top:109px;width:1px;height:357px;background:#fafafa;"></div>
<div style="left:932px;top:108px;width:28px;height:314px;background:#f0f0f0;border-left:1px solid #c8c8c8;border-bottom:1px solid #c8c8c8;"></div>
<div style="left:932px;top:422px;width:28px;height:44px;background:#f0f0f0;border-left:1px solid #c8c8c8;"></div>
<div style="left:909px;top:112px;width:2px;height:2px;background:#c6c6c6;"></div>
<div style="left:913px;top:112px;width:2px;height:2px;background:#c6c6c6;"></div>
<div style="left:917px;top:112px;width:2px;height:2px;background:#c6c6c6;"></div>
<div style="left:921px;top:112px;width:2px;height:2px;background:#c6c6c6;"></div>
<div style="left:925px;top:112px;width:2px;height:2px;background:#c6c6c6;"></div>
<div style="left:929px;top:112px;width:2px;height:2px;background:#c6c6c6;"></div>
<div style="left:935px;top:112px;width:2px;height:2px;background:#c6c6c6;"></div>
<div style="left:939px;top:112px;width:2px;height:2px;background:#c6c6c6;"></div>
<div style="left:943px;top:112px;width:2px;height:2px;background:#c6c6c6;"></div>
<div style="left:947px;top:112px;width:2px;height:2px;background:#c6c6c6;"></div>
<div style="left:951px;top:112px;width:2px;height:2px;background:#c6c6c6;"></div>
<div style="left:955px;top:112px;width:2px;height:2px;background:#c6c6c6;"></div>
<div style="left:935px;top:425px;width:2px;height:2px;background:#c6c6c6;"></div>
<div style="left:939px;top:425px;width:2px;height:2px;background:#c6c6c6;"></div>
<div style="left:943px;top:425px;width:2px;height:2px;background:#c6c6c6;"></div>
<div style="left:947px;top:425px;width:2px;height:2px;background:#c6c6c6;"></div>
<div style="left:951px;top:425px;width:2px;height:2px;background:#c6c6c6;"></div>
<div style="left:955px;top:425px;width:2px;height:2px;background:#c6c6c6;"></div>
<svg class="i" style="left:911px;top:122px;" width="16" height="16" viewBox="0 0 16 16"><path d="M3 2.3L14.7 12.7" stroke="#000" stroke-width="1.6"/></svg>
<svg class="i" style="left:911px;top:144px;" width="16" height="16" viewBox="0 0 16 16"><path d="M1.5 10L5 6.5L7.2 11L11 5.5L12.2 8L16.5 4.5" fill="none" stroke="#000" stroke-width="1.5" stroke-linejoin="miter"/></svg>
<svg class="i" style="left:911px;top:165px;" width="16" height="16" viewBox="0 0 16 16"><rect x="2.5" y="3.5" width="13.5" height="9.5" fill="#808080" stroke="#000" stroke-width="1.2"/></svg>
<svg class="i" style="left:911px;top:187px;" width="16" height="16" viewBox="0 0 16 16"><path d="M8.7 1.2L14.8 4.5V11.8L8.7 15.2L2.6 11.8V4.5Z" fill="#808080" stroke="#000" stroke-width="1.2"/></svg>
<svg class="i" style="left:911px;top:209px;" width="16" height="16" viewBox="0 0 16 16"><ellipse cx="9" cy="8" rx="6.6" ry="4.6" fill="#808080" stroke="#000" stroke-width="1.2"/></svg>
<svg class="i" style="left:911px;top:231px;" width="16" height="16" viewBox="0 0 16 16"><path d="M3.5 3.5C10 3.5 15 8 15.5 15" fill="none" stroke="#000" stroke-width="1.6"/></svg>
<svg class="i" style="left:911px;top:253px;" width="16" height="16" viewBox="0 0 16 16"><path d="M3.5 2.5C10.5 2.5 15.5 7.5 15.5 14.5H3.5Z" fill="#808080" stroke="#000" stroke-width="1.2"/></svg>
<div style="left:911px;top:274px;width:18px;height:1px;background:#a0a0a0;"></div>
<svg class="i" style="left:911px;top:282px;" width="16" height="16" viewBox="0 0 16 16"><rect x="1" y="0.5" width="15" height="14.5" fill="#fff" stroke="#303830" stroke-width="1"/><rect x="2.2" y="1.7" width="12.6" height="8" fill="#b8dcf8"/><rect x="2.2" y="9.5" width="12.6" height="4.3" fill="#58c038"/><circle cx="8.5" cy="5.5" r="3.4" fill="#189028"/><circle cx="6.5" cy="7" r="2" fill="#189028"/><circle cx="10.8" cy="7" r="2" fill="#189028"/><rect x="8" y="8" width="1.2" height="4" fill="#604020"/></svg>
<svg class="i" style="left:911px;top:303px;" width="16" height="16" viewBox="0 0 16 16"><rect x="2" y="2" width="13.5" height="13" rx="2.5" fill="#f4f0c0" stroke="#f0e020" stroke-width="2.2"/><rect x="3.7" y="3.7" width="10" height="9.6" rx="1" fill="#eeeeda" stroke="#d8c818" stroke-width="0.6"/></svg>
<div style="left:911px;top:324px;width:18px;height:1px;background:#a0a0a0;"></div>
<svg class="i" style="left:911px;top:332px;will-change:transform;" width="16" height="16" viewBox="0 0 16 16"><text x="1" y="15" font-family="Liberation Serif,serif" font-weight="bold" font-size="21" fill="#000" textLength="16" lengthAdjust="spacingAndGlyphs">A</text></svg>
<svg class="i" style="left:911px;top:354px;will-change:transform;" width="16" height="16" viewBox="0 0 16 16"><text x="1" y="7.5" font-family="Liberation Sans,sans-serif" font-size="9.5" fill="#000" textLength="15" lengthAdjust="spacingAndGlyphs">TE</text><text x="1" y="15.5" font-family="Liberation Sans,sans-serif" font-size="9.5" fill="#000" textLength="15" lengthAdjust="spacingAndGlyphs">XT</text></svg>
<svg class="i" style="left:911px;top:376px;" width="16" height="16" viewBox="0 0 16 16"><path d="M5.5 3.5H15.5V12L12.5 15.5H5.5Z" fill="#fafafa" stroke="#606870"/><path d="M7.5 7H13.5M7.5 9.5H13.5M7.5 12H11" stroke="#90a0b0" stroke-width="1"/><path d="M15.5 12H12.5V15.5" fill="#d0d4d8" stroke="#606870" stroke-width="0.8"/><circle cx="3.2" cy="3.8" r="2.5" fill="#30b0c8" stroke="#106880" stroke-width="0.7"/><circle cx="7" cy="4" r="2.3" fill="#30b0c8" stroke="#106880" stroke-width="0.7"/></svg>
<div style="left:911px;top:396px;width:18px;height:1px;background:#a0a0a0;"></div>
<svg class="i" style="left:911px;top:404px;will-change:transform;" width="16" height="16" viewBox="0 0 16 16"><text x="0.8" y="12.8" font-family="Liberation Sans,sans-serif" font-weight="bold" font-size="13.5" fill="#000" textLength="15.4" lengthAdjust="spacingAndGlyphs">DXF</text></svg>
<svg class="i" style="left:911px;top:426px;" width="16" height="16" viewBox="0 0 16 16"><rect x="2.8" y="1.8" width="12.4" height="11.4" fill="#fff" stroke="#000" stroke-width="1.6"/><path d="M7 2V13M11 2V13M3 5.7H15M3 9.4H15" stroke="#000" stroke-width="1.3"/></svg>
<svg class="i" style="left:938px;top:122px;will-change:transform;" width="16" height="16" viewBox="0 0 16 16"><rect x="1" y="3" width="15.5" height="11" fill="#707070"/><rect x="0.5" y="2.5" width="15" height="10.5" fill="#f0f0f0" stroke="#404040"/><text x="2" y="11.6" font-family="Liberation Sans,sans-serif" font-weight="bold" font-size="10.5" fill="#000" textLength="11.6" lengthAdjust="spacingAndGlyphs">123</text></svg>
<svg class="i" style="left:938px;top:144px;will-change:transform;" width="16" height="16" viewBox="0 0 16 16"><rect x="1" y="3" width="15.5" height="11" fill="#707070"/><rect x="0.5" y="2.5" width="15" height="10.5" fill="#f0f0f0" stroke="#404040"/><text x="2" y="11.6" font-family="Liberation Sans,sans-serif" font-weight="bold" font-size="10.5" fill="#000" textLength="11.6" lengthAdjust="spacingAndGlyphs">ABC</text></svg>
<svg class="i" style="left:938px;top:165px;" width="16" height="16" viewBox="0 0 16 16"><rect x="0.5" y="2.5" width="15" height="13" fill="#c0c4c8" stroke="#606468"/><rect x="11.5" y="3.5" width="3" height="11" fill="#e0e0e0" stroke="#808488" stroke-width="0.6"/><rect x="12.3" y="6" width="1.4" height="5" fill="#fff"/><path d="M2.5 5.5H10M2.5 8H10M2.5 10.5H8M2.5 13H10" stroke="#505860" stroke-width="1.1" stroke-dasharray="3 0.8"/></svg>
<svg class="i" style="left:938px;top:187px;" width="16" height="16" viewBox="0 0 16 16"><path d="M5 5.5L8 4.5L9.5 6L14 3.5C16 5 16.5 10 14.5 12.5L9.5 10L8 11.5L5 10.5C4 9 4 7 5 5.5Z" fill="#e81020" stroke="#900010" stroke-width="0.7"/><path d="M3.5 4C2 6 2 10 3.5 12M1.8 3C-0.2 6 -0.2 10 1.8 13" fill="none" stroke="#e81020" stroke-width="0.9"/><ellipse cx="8" cy="7" rx="1.5" ry="1" fill="#ffb0b0"/></svg>
<svg class="i" style="left:938px;top:209px;" width="16" height="16" viewBox="0 0 16 16"><path d="M1 6L4 3.5L7 1.5H12L15.5 5V10L13 13H11.5V15.5H6.5V13L3.5 10.5H1Z" fill="#a3a3a3"/></svg>
<svg class="i" style="left:938px;top:231px;" width="16" height="16" viewBox="0 0 16 16"><path d="M1.5 5C1.5 1.5 5.5 1.5 5.5 4.5V13.5C5.5 16 1.5 16 1.5 13.5Z" fill="#f4f4f4" stroke="#303030"/><path d="M5.5 6C7 3 9.5 3 11 6V14C9.5 11.5 7 11.5 5.5 14Z" fill="#e0e0e0" stroke="#303030"/><path d="M11 5C11 1.5 15.5 1.5 15.5 4.5V13C15.5 16 11 16 11 13.5Z" fill="#f4f4f4" stroke="#303030"/><path d="M3.5 4V14M13.2 4V14" stroke="#303030" stroke-width="1.2" stroke-dasharray="1.4 1.2"/></svg>
<svg class="i" style="left:938px;top:253px;" width="16" height="16" viewBox="0 0 16 16"><rect x="6.5" y="1.5" width="9" height="6.5" fill="#3098e8" stroke="#1050a0"/><rect x="8" y="2.8" width="6" height="2" fill="#90d0ff"/><rect x="1.5" y="8.5" width="8.5" height="6.5" fill="#f8d020" stroke="#a07800"/><path d="M0.5 4.5H6" stroke="#1838d0" stroke-width="1.3"/><path d="M2 2.5L0 4.5L2 6.5M4.5 2.5L6.5 4.5L4.5 6.5" fill="none" stroke="#1838d0" stroke-width="1.1"/><path d="M14 8.5V13H9" fill="none" stroke="#e01020" stroke-width="1.6"/><path d="M11 10.5L8 13L11 15.5Z" fill="#e01020"/></svg>
<svg class="i" style="left:938px;top:275px;" width="16" height="16" viewBox="0 0 16 16"><path d="M0.5 1H9L12.5 3.5L16 6V13L14 15.5H6L2.5 13.5L0.5 10Z" fill="#a3a3a3"/><circle cx="13.2" cy="6.3" r="0.9" fill="#f0f0f0"/></svg>
<svg class="i" style="left:938px;top:297px;" width="16" height="16" viewBox="0 0 16 16"><path d="M0.5 0.5H9V4.5H15.5V13.5H11V15.5H6V13.5H4.5V9.5H0.5Z" fill="#a3a3a3"/></svg>
<div style="left:938px;top:318px;width:18px;height:1px;background:#a0a0a0;"></div>
<svg class="i" style="left:938px;top:326px;" width="16" height="16" viewBox="0 0 16 16"><path d="M1.5 1V4M4 2V4M6.5 2V4M9 2V4M11.5 2V4M14.5 1V4" stroke="#202020" stroke-width="1"/><path d="M1 4H15" stroke="#202020" stroke-width="1"/><rect x="0.8" y="6.5" width="14.8" height="5.2" rx="1" fill="#e8eef4" stroke="#506070"/><rect x="1.5" y="7.2" width="9" height="3.8" fill="#e01818"/><path d="M1.5 8H10.5" stroke="#ff9090" stroke-width="0.8"/></svg>
<svg class="i" style="left:938px;top:348px;" width="16" height="16" viewBox="0 0 16 16"><circle cx="8" cy="8" r="7.3" fill="none" stroke="#384048" stroke-width="1.1" stroke-dasharray="1.3 1.55"/><circle cx="8" cy="8" r="6" fill="#e8ecf0" stroke="#404850" stroke-width="0.8"/><path d="M8 2.8A5.2 5.2 0 1 1 2.9 9.2L5.6 8.6A2.5 2.5 0 1 0 8 5.5Z" fill="#e01818"/><circle cx="8" cy="8" r="1.6" fill="#f4f4f4" stroke="#404850" stroke-width="0.8"/></svg>
<svg class="i" style="left:938px;top:370px;" width="16" height="16" viewBox="0 0 16 16"><path d="M0.8 3.5L3 5M4 1.8L5 4M8 1V3.5M12 1.8L11 4M15.2 3.5L13 5" stroke="#202020" stroke-width="1"/><path d="M1 5H15L13.5 9C12 11.5 4 11.5 2.5 9Z" fill="#e01818" stroke="#600008" stroke-width="0.8"/><path d="M10.5 6H13.8L13 8.5H10Z" fill="#f4f4f4"/></svg>
<svg class="i" style="left:938px;top:436px;" width="16" height="16" viewBox="0 0 16 16"><rect x="2.5" y="0.8" width="11.5" height="11.5" rx="1.2" fill="#58c040" stroke="#306820" stroke-width="0.9"/><rect x="3.6" y="1.9" width="9.3" height="4" fill="#90e070"/><path d="M5.5 15.2V8.5C5.5 5.5 10 5.5 10 8.5V15.2Z" fill="#f8d8a8" stroke="#a06830" stroke-width="0.8"/><path d="M6.5 8.5C6.5 6.8 9 6.8 9 8.5" fill="#fff4e0"/></svg>
<svg class="i" style="left:913px;top:456px;" width="17" height="8" viewBox="0 0 17 8"><path d="M3 1V6.2L0 3.6Z" fill="#000"/><path d="M10 0.6L12.8 3.2L15.6 0.6M10 4.2L12.8 6.8L15.6 4.2" fill="none" stroke="#000" stroke-width="1.4"/></svg>
<svg class="i" style="left:939px;top:456px;" width="17" height="8" viewBox="0 0 17 8"><path d="M3 1V6.2L0 3.6Z" fill="#000"/><path d="M10 0.6L12.8 3.2L15.6 0.6M10 4.2L12.8 6.8L15.6 4.2" fill="none" stroke="#000" stroke-width="1.4"/></svg>
<svg class="i" style="left:939px;top:411px;" width="17" height="8" viewBox="0 0 17 8"><path d="M3 1V6.2L0 3.6Z" fill="#000"/><path d="M10 0.6L12.8 3.2L15.6 0.6M10 4.2L12.8 6.8L15.6 4.2" fill="none" stroke="#000" stroke-width="1.4"/></svg>
<div style="left:0px;top:276px;width:906px;height:6px;background:#f0f0f0;"></div>
<div style="left:0px;top:281px;width:907px;height:21px;background:#c3d0df;border-top:1px solid #a4a4a4;border-bottom:1px solid #7c8088;"></div>
<span class="t" style="left:5px;top:285.5px;line-height:13px;color:#000;font-family:'Liberation Sans','IPAGothic',sans-serif;font-size:13px;font-weight:normal;-webkit-text-stroke:0.2px currentColor;transform:scaleX(0.9070);">検索結果一覧 [部品： 全機能+全制御　ｼｽﾃﾑ設定： 全ｼｽﾃﾑ設定　検索ｷｰ： 指定しない]</span>
<svg class="i" style="left:879px;top:286px;" width="7" height="9" viewBox="0 0 7 9"><g shape-rendering="crispEdges" fill="#000"><rect x="1" y="0" width="5" height="1"/><rect x="1" y="0" width="1" height="5"/><rect x="4" y="0" width="2" height="5"/><rect x="0" y="5" width="7" height="1"/><rect x="3" y="6" width="1" height="3"/></g></svg>
<svg class="i" style="left:894px;top:287px;" width="8" height="7" viewBox="0 0 8 7"><g shape-rendering="crispEdges" fill="#000"><rect x="0" y="0" width="2" height="1"/><rect x="6" y="0" width="2" height="1"/><rect x="1" y="1" width="2" height="1"/><rect x="5" y="1" width="2" height="1"/><rect x="2" y="2" width="2" height="1"/><rect x="4" y="2" width="2" height="1"/><rect x="3" y="3" width="2" height="1"/><rect x="2" y="4" width="2" height="1"/><rect x="4" y="4" width="2" height="1"/><rect x="1" y="5" width="2" height="1"/><rect x="5" y="5" width="2" height="1"/><rect x="0" y="6" width="2" height="1"/><rect x="6" y="6" width="2" height="1"/></g></svg>
<div style="left:0px;top:302px;width:907px;height:164px;background:#f0f0f0;border-left:1px solid #f0f0f0;"></div>
<div style="left:2px;top:302px;width:1px;height:164px;background:#8a8a8a;"></div>
<div style="left:906px;top:302px;width:1px;height:164px;background:#dcdcdc;"></div>
<span class="t" style="left:27px;top:309.5px;line-height:13px;height:13px;color:#000;font-family:'Liberation Sans','IPAGothic',sans-serif;font-size:13px;font-weight:normal;-webkit-text-stroke:0.2px currentColor;"><span class="s" style="width:27.5px"><span style="transform:scaleX(0.9702);"><span style="font-size:14.9px">ﾍ<span style="margin-left:-0.2em;margin-right:-0.1em">ﾟ</span>ｰｼ<span style="margin-left:-0.2em;margin-right:-0.1em">ﾞ</span></span></span></span><span class="s" style="width:15px"><span style="transform:scaleX(0.8641);">(<u>P</u>)</span></span></span>
<div style="left:85px;top:307px;width:123px;height:19px;background:#fff;border:1px solid #d0d0d0;border-bottom-color:#a8a8a8;border-radius:3px;"></div>
<span class="t" style="left:90px;top:309.5px;line-height:13px;height:13px;color:#000;font-family:'Liberation Sans','IPAGothic',sans-serif;font-size:13px;font-weight:normal;-webkit-text-stroke:0.2px currentColor;"><span class="s" style="width:12px"><span style="transform:scaleX(0.9231);">全</span></span><span class="s" style="width:27px"><span style="transform:scaleX(0.9526);"><span style="font-size:14.9px">ﾍ<span style="margin-left:-0.2em;margin-right:-0.1em">ﾟ</span>ｰｼ<span style="margin-left:-0.2em;margin-right:-0.1em">ﾞ</span></span></span></span></span>
<svg class="i" style="left:194px;top:314px;" width="10" height="6" viewBox="0 0 10 6"><path d="M0.5 0.5L5 5L9.5 0.5" fill="none" stroke="#5a5a5a" stroke-width="1"/></svg>
<span class="t" style="left:216px;top:309.5px;line-height:13px;height:13px;color:#000;font-family:'Liberation Sans','IPAGothic',sans-serif;font-size:13px;font-weight:normal;-webkit-text-stroke:0.2px currentColor;"><span class="s" style="width:36px"><span style="transform:scaleX(0.8948);"><span style="font-size:14.9px">ｳｨﾝﾄ<span style="margin-left:-0.2em;margin-right:-0.1em">ﾞ</span>ｳ</span></span></span><span class="s" style="width:18px"><span style="transform:scaleX(0.8584);">(<u>W</u>)</span></span></span>
<div style="left:277px;top:307px;width:92px;height:19px;background:#fff;border:1px solid #d0d0d0;border-bottom-color:#a8a8a8;border-radius:3px;"></div>
<span class="t" style="left:282px;top:309.5px;line-height:13px;height:13px;color:#000;font-family:'Liberation Sans','IPAGothic',sans-serif;font-size:13px;font-weight:normal;-webkit-text-stroke:0.2px currentColor;"><span class="s" style="width:12px"><span style="transform:scaleX(0.9231);">全</span></span><span class="s" style="width:35px"><span style="transform:scaleX(0.8699);"><span style="font-size:14.9px">ｳｨﾝﾄ<span style="margin-left:-0.2em;margin-right:-0.1em">ﾞ</span>ｳ</span></span></span></span>
<svg class="i" style="left:355px;top:314px;" width="10" height="6" viewBox="0 0 10 6"><path d="M0.5 0.5L5 5L9.5 0.5" fill="none" stroke="#5a5a5a" stroke-width="1"/></svg>
<div style="left:383px;top:309px;width:13px;height:13px;background:#0067c0;border-radius:3px;"></div>
<svg class="i" style="left:384px;top:311px;" width="11" height="9" viewBox="0 0 11 9"><path d="M2 4.5L4.5 7L9 2" fill="none" stroke="#fff" stroke-width="1.3"/></svg>
<span class="t" style="left:398.5px;top:309.5px;line-height:13px;height:13px;color:#000;font-family:'Liberation Sans','IPAGothic',sans-serif;font-size:13px;font-weight:normal;-webkit-text-stroke:0.2px currentColor;"><span class="s" style="width:32px"><span style="transform:scaleX(1.0745);"><span style="font-size:14.9px">ｼｽﾃﾑ</span></span></span><span class="s" style="width:24px"><span style="transform:scaleX(0.9231);">設定</span></span><span class="s" style="width:10.5px"><span style="transform:scaleX(0.8077);">の</span></span><span class="s" style="width:23.5px"><span style="transform:scaleX(0.9038);">表示</span></span></span>
<div style="left:525px;top:307px;width:79px;height:18px;background:#fdfdfd;border:1px solid #d0d0d0;border-bottom-color:#b8b8b8;border-radius:4px;"></div>
<span class="t" style="left:543px;top:309.5px;line-height:13px;height:13px;color:#000;font-family:'Liberation Sans','IPAGothic',sans-serif;font-size:13px;font-weight:normal;-webkit-text-stroke:0.2px currentColor;"><span class="s" style="width:24px"><span style="transform:scaleX(0.9231);">検索</span></span><span class="s" style="width:16px"><span style="transform:scaleX(0.9217);">(<u>S</u>)</span></span></span>
<div style="left:621px;top:307px;width:93px;height:18px;background:#fdfdfd;border:1px solid #d0d0d0;border-bottom-color:#b8b8b8;border-radius:4px;"></div>
<span class="t" style="left:635px;top:309.5px;line-height:13px;height:13px;color:#000;font-family:'Liberation Sans','IPAGothic',sans-serif;font-size:13px;font-weight:normal;-webkit-text-stroke:0.2px currentColor;"><span class="s" style="width:48px"><span style="transform:scaleX(0.9231);">設定変更</span></span><span class="s" style="width:15px"><span style="transform:scaleX(0.9014);">(<u>T</u>)</span></span></span>
<div style="left:729px;top:307px;width:129px;height:18px;background:#fdfdfd;border:1px solid #d0d0d0;border-bottom-color:#b8b8b8;border-radius:4px;"></div>
<span class="t" style="left:742.5px;top:309.5px;line-height:13px;height:13px;color:#000;font-family:'Liberation Sans','IPAGothic',sans-serif;font-size:13px;font-weight:normal;-webkit-text-stroke:0.2px currentColor;"><span class="s" style="width:36.5px"><span style="transform:scaleX(1.0196);"><span style="font-size:14.9px">ﾃ<span style="margin-left:-0.2em;margin-right:-0.1em">ﾞ</span>ﾊ<span style="margin-left:-0.2em;margin-right:-0.1em">ﾞ</span>ｲｽ</span></span></span><span class="s" style="width:47.5px"><span style="transform:scaleX(0.9135);">一括変更</span></span><span class="s" style="width:16px"><span style="transform:scaleX(0.8850);">(<u>D</u>)</span></span></span>
<div style="left:14px;top:333px;width:884px;height:107px;background:#fff;border-left:2px solid #828282;border-top:2px solid #828282;border-right:1px solid #e0e0e0;border-bottom:1px solid #e0e0e0;"></div>
<div style="left:16px;top:335px;width:864px;height:14px;background:#f0f0f0;border-bottom:1px solid #a0a0a0;"></div>
<div style="left:155px;top:335px;width:1px;height:14px;background:#fff;"></div>
<div style="left:154px;top:335px;width:1px;height:14px;background:#a0a0a0;"></div>
<div style="left:155px;top:349px;width:1px;height:90px;background:#ececec;"></div>
<div style="left:225px;top:335px;width:1px;height:14px;background:#fff;"></div>
<div style="left:224px;top:335px;width:1px;height:14px;background:#a0a0a0;"></div>
<div style="left:225px;top:349px;width:1px;height:90px;background:#ececec;"></div>
<div style="left:365px;top:335px;width:1px;height:14px;background:#fff;"></div>
<div style="left:364px;top:335px;width:1px;height:14px;background:#a0a0a0;"></div>
<div style="left:365px;top:349px;width:1px;height:90px;background:#ececec;"></div>
<div style="left:485px;top:335px;width:1px;height:14px;background:#fff;"></div>
<div style="left:484px;top:335px;width:1px;height:14px;background:#a0a0a0;"></div>
<div style="left:485px;top:349px;width:1px;height:90px;background:#ececec;"></div>
<div style="left:555px;top:335px;width:1px;height:14px;background:#fff;"></div>
<div style="left:554px;top:335px;width:1px;height:14px;background:#a0a0a0;"></div>
<div style="left:555px;top:349px;width:1px;height:90px;background:#ececec;"></div>
<div style="left:880px;top:335px;width:1px;height:104px;background:#ececec;"></div>
<div style="left:16px;top:364px;width:864px;height:1px;background:#ececec;"></div>
<div style="left:16px;top:379px;width:864px;height:1px;background:#ececec;"></div>
<div style="left:16px;top:394px;width:864px;height:1px;background:#ececec;"></div>
<div style="left:16px;top:409px;width:864px;height:1px;background:#ececec;"></div>
<div style="left:16px;top:424px;width:864px;height:1px;background:#ececec;"></div>
<span class="t" style="left:18px;top:335.0px;line-height:13px;height:13px;color:#000;font-family:'Liberation Sans','IPAGothic',sans-serif;font-size:13px;font-weight:normal;-webkit-text-stroke:0.2px currentColor;"><span class="s" style="width:24.5px"><span style="transform:scaleX(0.9423);">画面</span></span><span class="s" style="width:5.5px"><span style="transform:scaleX(0.7379);"><span style="font-size:14.9px">･</span></span></span><span class="s" style="width:29.5px"><span style="transform:scaleX(0.9906);"><span style="font-size:14.9px">ｼｽﾃﾑ</span></span></span><span class="s" style="width:24px"><span style="transform:scaleX(0.9231);">設定</span></span></span>
<span class="t" style="left:159px;top:335.0px;line-height:13px;color:#000;font-family:'Liberation Sans','IPAGothic',sans-serif;font-size:13px;font-weight:normal;-webkit-text-stroke:0.2px currentColor;transform:scaleX(0.8718);">画面ID</span>
<span class="t" style="left:229px;top:335.0px;line-height:13px;color:#000;font-family:'Liberation Sans','IPAGothic',sans-serif;font-size:13px;font-weight:normal;-webkit-text-stroke:0.2px currentColor;transform:scaleX(0.9231);">座標</span>
<span class="t" style="left:369px;top:335.0px;line-height:13px;color:#000;font-family:'Liberation Sans','IPAGothic',sans-serif;font-size:13px;font-weight:normal;-webkit-text-stroke:0.2px currentColor;transform:scaleX(0.9231);">内容</span>
<span class="t" style="left:489px;top:335.0px;line-height:13px;color:#000;font-family:'Liberation Sans','IPAGothic',sans-serif;font-size:13px;font-weight:normal;-webkit-text-stroke:0.2px currentColor;transform:scaleX(1.0057);"><span style="font-size:14.9px">ﾃ<span style="margin-left:-0.2em;margin-right:-0.1em">ﾞ</span>ﾊ<span style="margin-left:-0.2em;margin-right:-0.1em">ﾞ</span>ｲｽ</span></span>
<span class="t" style="left:559px;top:335.0px;line-height:13px;color:#000;font-family:'Liberation Sans','IPAGothic',sans-serif;font-size:13px;font-weight:normal;-webkit-text-stroke:0.2px currentColor;transform:scaleX(0.9231);">設定内容</span>
<span class="t" style="left:24px;top:350.0px;line-height:13px;color:#000;font-family:'Liberation Sans','IPAGothic',sans-serif;font-size:13px;font-weight:normal;-webkit-text-stroke:0.2px currentColor;transform:scaleX(0.7808);">0000_B</span>
<span class="t" style="left:159px;top:350.0px;line-height:13px;color:#000;font-family:'Liberation Sans','IPAGothic',sans-serif;font-size:13px;font-weight:normal;-webkit-text-stroke:0.2px currentColor;transform:scaleX(0.7582);">@0000_B</span>
<span class="t" style="left:228px;top:350.0px;line-height:13px;color:#000;font-family:'Liberation Sans','IPAGothic',sans-serif;font-size:13px;font-weight:normal;-webkit-text-stroke:0.2px currentColor;transform:scaleX(0.8649);">(0,0)-(320,128)</span>
<span class="t" style="left:381px;top:350.5px;line-height:13px;color:#000;font-family:'Liberation Sans','IPAGothic',sans-serif;font-size:13px;font-weight:normal;-webkit-text-stroke:0.2px currentColor;transform:scaleX(0.9231);">画面属性</span>
<span class="t" style="left:559px;top:350.5px;line-height:13px;height:13px;color:#000;font-family:'Liberation Sans','IPAGothic',sans-serif;font-size:13px;font-weight:normal;-webkit-text-stroke:0.2px currentColor;"><span class="s" style="width:23.5px"><span style="transform:scaleX(0.9038);">画面</span></span><span class="s" style="width:11px"><span style="transform:scaleX(0.8462);">ID</span></span><span class="s" style="width:4.5px"><span style="transform:scaleX(1.2414);">[</span></span><span class="s" style="width:44px"><span style="transform:scaleX(0.7582);">@0000_B</span></span><span class="s" style="width:4.5px"><span style="transform:scaleX(1.2414);">]</span></span><span class="s" style="width:4.2px"><span style=""> </span></span><span class="s" style="width:42px"><span style="transform:scaleX(0.8807);"><span style="font-size:14.9px">ﾊ<span style="margin-left:-0.2em;margin-right:-0.1em">ﾞ</span>ｯｸﾗｲﾄ</span></span></span><span class="s" style="width:12.3px"><span style="transform:scaleX(0.9462);">色</span></span><span class="s" style="width:4px"><span style="transform:scaleX(1.1034);">[</span></span><span class="s" style="width:12px"><span style="transform:scaleX(0.9231);">緑</span></span><span class="s" style="width:4px"><span style="transform:scaleX(1.1034);">]</span></span><span class="s" style="width:4.8px"><span style=""> </span></span><span class="s" style="width:24.2px"><span style="transform:scaleX(0.9308);">描画</span></span><span class="s" style="width:37.8px"><span style="transform:scaleX(0.9395);"><span style="font-size:14.9px">ｵﾌ<span style="margin-left:-0.2em;margin-right:-0.1em">ﾟ</span>ｼｮﾝ</span></span></span><span class="s" style="width:4.2px"><span style="transform:scaleX(1.1586);">[</span></span><span class="s" style="width:48px"><span style="transform:scaleX(0.9231);">速度優先</span></span><span class="s" style="width:4px"><span style="transform:scaleX(1.1034);">]</span></span></span>
<span class="t" style="left:19px;top:365.0px;line-height:13px;height:13px;color:#000;font-family:'Liberation Sans','IPAGothic',sans-serif;font-size:13px;font-weight:normal;-webkit-text-stroke:0.2px currentColor;"><span class="s" style="width:14.5px"><span style="transform:scaleX(0.8722);">VT</span></span><span class="s" style="width:24px"><span style="transform:scaleX(0.9231);">本体</span></span><span class="s" style="width:29px"><span style="transform:scaleX(0.9738);"><span style="font-size:14.9px">ｼｽﾃﾑ</span></span></span><span class="s" style="width:24px"><span style="transform:scaleX(0.9231);">設定</span></span></span>
<span class="t" style="left:381px;top:365.0px;line-height:13px;height:13px;color:#000;font-family:'Liberation Sans','IPAGothic',sans-serif;font-size:13px;font-weight:normal;-webkit-text-stroke:0.2px currentColor;"><span class="s" style="width:14.5px"><span style="transform:scaleX(0.8722);">VT</span></span><span class="s" style="width:29.5px"><span style="transform:scaleX(0.9906);"><span style="font-size:14.9px">ｼｽﾃﾑ</span></span></span></span>
<span class="t" style="left:19px;top:380.0px;line-height:13px;height:13px;color:#000;font-family:'Liberation Sans','IPAGothic',sans-serif;font-size:13px;font-weight:normal;-webkit-text-stroke:0.2px currentColor;"><span class="s" style="width:14.5px"><span style="transform:scaleX(0.8722);">VT</span></span><span class="s" style="width:24px"><span style="transform:scaleX(0.9231);">本体</span></span><span class="s" style="width:29px"><span style="transform:scaleX(0.9738);"><span style="font-size:14.9px">ｼｽﾃﾑ</span></span></span><span class="s" style="width:24px"><span style="transform:scaleX(0.9231);">設定</span></span></span>
<span class="t" style="left:381px;top:380.0px;line-height:13px;height:13px;color:#000;font-family:'Liberation Sans','IPAGothic',sans-serif;font-size:13px;font-weight:normal;-webkit-text-stroke:0.2px currentColor;"><span class="s" style="width:20px"><span style="transform:scaleX(0.7906);">PLC</span></span><span class="s" style="width:48px"><span style="transform:scaleX(0.9231);">通信条件</span></span></span>
<span class="t" style="left:19px;top:395.0px;line-height:13px;height:13px;color:#000;font-family:'Liberation Sans','IPAGothic',sans-serif;font-size:13px;font-weight:normal;-webkit-text-stroke:0.2px currentColor;"><span class="s" style="width:14.5px"><span style="transform:scaleX(0.8722);">VT</span></span><span class="s" style="width:24px"><span style="transform:scaleX(0.9231);">本体</span></span><span class="s" style="width:29px"><span style="transform:scaleX(0.9738);"><span style="font-size:14.9px">ｼｽﾃﾑ</span></span></span><span class="s" style="width:24px"><span style="transform:scaleX(0.9231);">設定</span></span></span>
<span class="t" style="left:381px;top:395.0px;line-height:13px;color:#000;font-family:'Liberation Sans','IPAGothic',sans-serif;font-size:13px;font-weight:normal;-webkit-text-stroke:0.2px currentColor;transform:scaleX(0.9231);">部品</span>
<span class="t" style="left:19px;top:410.0px;line-height:13px;height:13px;color:#000;font-family:'Liberation Sans','IPAGothic',sans-serif;font-size:13px;font-weight:normal;-webkit-text-stroke:0.2px currentColor;"><span class="s" style="width:14.5px"><span style="transform:scaleX(0.8722);">VT</span></span><span class="s" style="width:24px"><span style="transform:scaleX(0.9231);">本体</span></span><span class="s" style="width:29px"><span style="transform:scaleX(0.9738);"><span style="font-size:14.9px">ｼｽﾃﾑ</span></span></span><span class="s" style="width:24px"><span style="transform:scaleX(0.9231);">設定</span></span></span>
<span class="t" style="left:381px;top:410.0px;line-height:13px;height:13px;color:#000;font-family:'Liberation Sans','IPAGothic',sans-serif;font-size:13px;font-weight:normal;-webkit-text-stroke:0.2px currentColor;"><span class="s" style="width:24px"><span style="transform:scaleX(0.9231);">操作</span></span><span class="s" style="width:16px"><span style="transform:scaleX(0.8943);"><span style="font-size:14.9px">ﾛｸ<span style="margin-left:-0.2em;margin-right:-0.1em">ﾞ</span></span></span></span></span>
<span class="t" style="left:19px;top:425.0px;line-height:13px;height:13px;color:#000;font-family:'Liberation Sans','IPAGothic',sans-serif;font-size:13px;font-weight:normal;-webkit-text-stroke:0.2px currentColor;"><span class="s" style="width:14.5px"><span style="transform:scaleX(0.8722);">VT</span></span><span class="s" style="width:24px"><span style="transform:scaleX(0.9231);">本体</span></span><span class="s" style="width:29px"><span style="transform:scaleX(0.9738);"><span style="font-size:14.9px">ｼｽﾃﾑ</span></span></span><span class="s" style="width:24px"><span style="transform:scaleX(0.9231);">設定</span></span></span>
<span class="t" style="left:381px;top:425.0px;line-height:13px;height:13px;color:#000;font-family:'Liberation Sans','IPAGothic',sans-serif;font-size:13px;font-weight:normal;-webkit-text-stroke:0.2px currentColor;"><span class="s" style="width:20px"><span style="transform:scaleX(0.7906);">PLC</span></span><span class="s" style="width:48px"><span style="transform:scaleX(0.9231);">時刻同期</span></span></span>
<div style="left:881px;top:335px;width:16px;height:104px;background:#f1f1f1;"></div>
<div style="left:888px;top:352px;width:2px;height:59px;background:#8a8a8a;border-radius:1px;"></div>
<div style="left:571px;top:450px;width:17px;height:1px;background:#8a8a8a;"></div>
<div style="left:0px;top:466px;width:587px;height:26px;background:#f0f0f0;border-top:1px solid #d8d8d8;border-bottom:1px solid #d0d0d0;"></div>
<div style="left:404px;top:466px;width:1px;height:26px;background:#c8c8c8;"></div>
<div style="left:587px;top:466px;width:1px;height:26px;background:#c8c8c8;"></div>
<div style="left:5px;top:469px;width:2px;height:2px;background:#c6c6c6;"></div>
<div style="left:5px;top:473px;width:2px;height:2px;background:#c6c6c6;"></div>
<div style="left:5px;top:477px;width:2px;height:2px;background:#c6c6c6;"></div>
<div style="left:5px;top:481px;width:2px;height:2px;background:#c6c6c6;"></div>
<div style="left:5px;top:485px;width:2px;height:2px;background:#c6c6c6;"></div>
<div style="left:5px;top:489px;width:2px;height:2px;background:#c6c6c6;"></div>
<div style="left:409px;top:469px;width:2px;height:2px;background:#c6c6c6;"></div>
<div style="left:409px;top:473px;width:2px;height:2px;background:#c6c6c6;"></div>
<div style="left:409px;top:477px;width:2px;height:2px;background:#c6c6c6;"></div>
<div style="left:409px;top:481px;width:2px;height:2px;background:#c6c6c6;"></div>
<div style="left:409px;top:485px;width:2px;height:2px;background:#c6c6c6;"></div>
<div style="left:409px;top:489px;width:2px;height:2px;background:#c6c6c6;"></div>
<svg class="i" style="left:14px;top:472px;" width="16" height="16" viewBox="0 0 16 16"><path d="M0.5 8L4 6L8 1.5H11.5L15.5 5.5V8.5L12.5 10.5L14 13V15.5H9.5L8.5 13.5L6 15.5H0.5Z" fill="#a3a3a3"/></svg>
<div class="hl" style="left:33px;top:469px;width:22px;height:21px;"></div>
<svg class="i" style="left:36px;top:472px;" width="16" height="16" viewBox="0 0 16 16"><g transform="translate(4.2,2)"><path d="M0.5 0.5V11.5L3.3 9L5.3 13.5L7.3 12.5L5.4 8.2H9Z" fill="#ffe820" stroke="#3a3000" stroke-width="0.9" stroke-linejoin="round"/></g></svg>
<div style="left:58px;top:470px;width:1px;height:18px;background:#a0a0a0;"></div>
<svg class="i" style="left:64px;top:472px;" width="16" height="16" viewBox="0 0 16 16"><circle cx="4.5" cy="4" r="3.5" fill="#a3a3a3"/><rect x="9" y="1.5" width="6.5" height="6" fill="#a3a3a3"/><rect x="1" y="6" width="15" height="10" fill="#a3a3a3"/><path d="M2.5 12.5H14.5" stroke="#f0f0f0" stroke-width="1.6" stroke-dasharray="1.2 1 2.5 1"/></svg>
<svg class="i" style="left:86px;top:472px;" width="16" height="16" viewBox="0 0 16 16"><path d="M2.8 1h4l2.2 2.2v4l-2.2 2.2h-4l-2.2 -2.2v-4z" fill="#a3a3a3"/><path d="M9 7.6h4l2.2 2.2v4l-2.2 2.2h-4l-2.2 -2.2v-4z" fill="#a3a3a3"/><path d="M8.5 4L12 3L11.5 6.5" fill="none" stroke="#a3a3a3" stroke-width="1.1"/></svg>
<svg class="i" style="left:108px;top:472px;" width="16" height="16" viewBox="0 0 16 16"><rect x="2.5" y="1.5" width="12" height="12" fill="#dcdcdc" stroke="#a3a3a3" stroke-width="1.4"/><path d="M2.5 1.5L14.5 13.5M14.5 1.5L2.5 13.5" stroke="#a3a3a3" stroke-width="1.2"/><path d="M1 15.5H16V3" fill="none" stroke="#a3a3a3" stroke-width="1.2"/></svg>
<div style="left:129px;top:470px;width:1px;height:18px;background:#a0a0a0;"></div>
<svg class="i" style="left:137px;top:472px;" width="16" height="16" viewBox="0 0 16 16"><circle cx="8.5" cy="8.5" r="4.5" fill="none" stroke="#a3a3a3" stroke-width="1" stroke-dasharray="1 1.1"/><path d="M3.5 5C6 1.5 11 1.5 13.5 5.5" fill="none" stroke="#b4b4b4" stroke-width="1.3"/><path d="M11.5 6.5H15.5V2.5Z" fill="#b0b0b0"/><path d="M13.5 12C11 15.5 6 15.5 3.5 11.5" fill="none" stroke="#b4b4b4" stroke-width="1.3"/><path d="M5.5 10.5H1.5V14.5Z" fill="#b0b0b0"/></svg>
<svg class="i" style="left:158px;top:472px;" width="16" height="16" viewBox="0 0 16 16"><path d="M7 3V14H1.5Z" fill="#a3a3a3"/><path d="M9.5 3V14H15Z" fill="#a3a3a3"/></svg>
<svg class="i" style="left:180px;top:472px;" width="16" height="16" viewBox="0 0 16 16"><path d="M15 2.5V8H3.5Z" fill="#a3a3a3"/><path d="M15 10H3.5L15 15.5Z" fill="#a3a3a3"/></svg>
<svg class="i" style="left:202px;top:472px;" width="16" height="16" viewBox="0 0 16 16"><path d="M8.5 8L15.5 16H1.5Z" fill="#a3a3a3"/><path d="M8.5 1.5L5 8.5M8.5 1.5L12 8.5" stroke="#a3a3a3" stroke-width="1.2" stroke-dasharray="1.2 1.2"/><rect x="7.6" y="0.5" width="1.8" height="1.8" fill="#a3a3a3"/></svg>
<div style="left:223px;top:470px;width:1px;height:18px;background:#a0a0a0;"></div>
<svg class="i" style="left:230px;top:472px;" width="16" height="16" viewBox="0 0 16 16"><rect x="0.5" y="1" width="8" height="8" fill="#a3a3a3"/><rect x="4" y="4.5" width="8" height="8" fill="#a3a3a3"/><rect x="8" y="8" width="8" height="8" fill="#a3a3a3"/></svg>
<svg class="i" style="left:252px;top:472px;" width="16" height="16" viewBox="0 0 16 16"><rect x="0.5" y="1" width="8" height="8" fill="#a3a3a3"/><rect x="4" y="4.5" width="8" height="8" fill="#a3a3a3"/><rect x="8" y="8" width="8" height="8" fill="#a3a3a3"/></svg>
<svg class="i" style="left:274px;top:472px;" width="16" height="16" viewBox="0 0 16 16"><rect x="1.5" y="1.5" width="9" height="9" fill="#a3a3a3"/><rect x="6.5" y="6.5" width="9" height="9" fill="#a3a3a3"/></svg>
<svg class="i" style="left:296px;top:472px;" width="16" height="16" viewBox="0 0 16 16"><rect x="1.5" y="1.5" width="9" height="9" fill="#a3a3a3"/><rect x="6.5" y="6.5" width="9" height="9" fill="#a3a3a3"/></svg>
<svg class="i" style="left:318px;top:472px;" width="16" height="16" viewBox="0 0 16 16"><rect x="2" y="1.5" width="8" height="8" fill="#a3a3a3"/><rect x="7" y="6.5" width="8" height="8" fill="#a3a3a3"/><rect x="0.5" y="12.5" width="2" height="2" fill="#a3a3a3"/><rect x="13" y="0.5" width="2" height="2" fill="#a3a3a3"/><rect x="0.5" y="0.5" width="2" height="2" fill="#a3a3a3"/><rect x="13" y="13" width="2" height="2" fill="#a3a3a3"/></svg>
<svg class="i" style="left:340px;top:472px;" width="16" height="16" viewBox="0 0 16 16"><rect x="1.5" y="1" width="9.5" height="9.5" fill="#a3a3a3"/><rect x="6.5" y="6" width="9.5" height="9.5" fill="#a3a3a3"/></svg>
<svg class="i" style="left:362px;top:472px;" width="16" height="16" viewBox="0 0 16 16"><path d="M1.5 1V16" stroke="#a3a3a3" stroke-width="1.2"/><path d="M2 5.5H7M2 11.5H7" stroke="#a3a3a3" stroke-width="1"/><path d="M2 5.5L4.5 3.5V7.5ZM2 11.5L4.5 9.5V13.5Z" fill="#a3a3a3"/><rect x="6" y="2" width="7.5" height="7.5" fill="#a3a3a3"/><rect x="8.5" y="7.5" width="7.5" height="7.5" fill="#a3a3a3"/></svg>
<svg class="i" style="left:382px;top:478px;" width="8" height="4" viewBox="0 0 8 4"><path d="M0 0H8L4 4Z" fill="#8c8c8c"/></svg>
<svg class="i" style="left:395px;top:484px;" width="5" height="3" viewBox="0 0 5 3"><path d="M0 0H5L2.5 3Z" fill="#000"/></svg>
<div class="hl" style="left:414px;top:469px;width:22px;height:21px;"></div>
<svg class="i" style="left:417px;top:472px;" width="16" height="16" viewBox="0 0 16 16"><path d="M1.5 1V16" stroke="#1838c8" stroke-width="1.3"/><rect x="1.5" y="1.5" width="6" height="5" fill="#fff" stroke="#7828a8" stroke-width="1.2"/><rect x="5" y="9" width="9" height="7" fill="#707070"/><rect x="4.5" y="8.5" width="8" height="6" fill="url(#gWin)" stroke="#505050"/><g transform="translate(9,8) rotate(-12)"><path d="M0.5 0.5V9.5L2.8 7.5L4.6 11.5L6.4 10.6L4.7 6.8H7.8Z" fill="#f0f020" stroke="#303000" stroke-width="0.9" stroke-linejoin="round"/></g></svg>
<div style="left:439px;top:470px;width:1px;height:18px;background:#a0a0a0;"></div>
<div class="hl" style="left:443px;top:469px;width:22px;height:21px;"></div>
<svg class="i" style="left:446px;top:472px;" width="16" height="16" viewBox="0 0 16 16"><path d="M1.5 0V17" stroke="#1838c8" stroke-width="1.4"/><rect x="3" y="4" width="10" height="9" fill="#707070"/><rect x="2.5" y="3.5" width="9" height="8" fill="url(#gWin)" stroke="#505050"/><g transform="translate(7,5)"><path d="M0.5 0.5V9.5L2.8 7.5L4.6 11.5L6.4 10.6L4.7 6.8H7.8Z" fill="#f0f020" stroke="#303000" stroke-width="0.9" stroke-linejoin="round"/></g></svg>
<svg class="i" style="left:469px;top:472px;" width="16" height="16" viewBox="0 0 16 16"><rect x="3" y="4" width="10" height="9" fill="#707070"/><rect x="2.5" y="3.5" width="9" height="8" fill="url(#gWin)" stroke="#505050"/><path d="M13.5 0V17" stroke="#1838c8" stroke-width="1.4"/><g transform="translate(5,5)"><path d="M0.5 0.5V9.5L2.8 7.5L4.6 11.5L6.4 10.6L4.7 6.8H7.8Z" fill="#f0f020" stroke="#303000" stroke-width="0.9" stroke-linejoin="round"/></g></svg>
<div class="hl" style="left:487px;top:469px;width:22px;height:21px;"></div>
<svg class="i" style="left:490px;top:472px;" width="16" height="16" viewBox="0 0 16 16"><path d="M0 2.5H16" stroke="#1838c8" stroke-width="1.4"/><rect x="3" y="4" width="10" height="9" fill="#707070"/><rect x="2.5" y="3.5" width="9" height="8" fill="url(#gWin)" stroke="#505050"/><g transform="translate(7,5)"><path d="M0.5 0.5V9.5L2.8 7.5L4.6 11.5L6.4 10.6L4.7 6.8H7.8Z" fill="#f0f020" stroke="#303000" stroke-width="0.9" stroke-linejoin="round"/></g></svg>
<svg class="i" style="left:513px;top:472px;" width="16" height="16" viewBox="0 0 16 16"><rect x="2" y="3" width="10" height="9" fill="#707070"/><rect x="1.5" y="2.5" width="9" height="8" fill="url(#gWin)" stroke="#505050"/><path d="M-1 10.5H16" stroke="#1838c8" stroke-width="1.4"/><g transform="translate(6,5)"><path d="M0.5 0.5V9.5L2.8 7.5L4.6 11.5L6.4 10.6L4.7 6.8H7.8Z" fill="#f0f020" stroke="#303000" stroke-width="0.9" stroke-linejoin="round"/></g></svg>
<div class="hl" style="left:531px;top:469px;width:22px;height:21px;"></div>
<svg class="i" style="left:534px;top:472px;" width="16" height="16" viewBox="0 0 16 16"><rect x="1" y="4" width="10" height="9" fill="#707070"/><rect x="0.5" y="3.5" width="9" height="8" fill="url(#gWin)" stroke="#505050"/><path d="M5.5 1V15" stroke="#1838c8" stroke-width="1.4"/><g transform="translate(8,5)"><path d="M0.5 0.5V9.5L2.8 7.5L4.6 11.5L6.4 10.6L4.7 6.8H7.8Z" fill="#f0f020" stroke="#303000" stroke-width="0.9" stroke-linejoin="round"/></g></svg>
<div class="hl" style="left:553px;top:469px;width:22px;height:21px;"></div>
<svg class="i" style="left:556px;top:472px;" width="16" height="16" viewBox="0 0 16 16"><rect x="3" y="2" width="11" height="9" fill="#707070"/><rect x="2.5" y="1.5" width="10" height="8" fill="url(#gWin)" stroke="#505050"/><path d="M0 5.5H16" stroke="#1838c8" stroke-width="1.4"/><g transform="translate(6,6.5)"><path d="M0.5 0.5V9.5L2.8 7.5L4.6 11.5L6.4 10.6L4.7 6.8H7.8Z" fill="#f0f020" stroke="#303000" stroke-width="0.9" stroke-linejoin="round"/></g></svg>
<svg class="i" style="left:578px;top:484px;" width="5" height="3" viewBox="0 0 5 3"><path d="M0 0H5L2.5 3Z" fill="#000"/></svg>
<div style="left:0px;top:492px;width:454px;height:26px;background:#f0f0f0;border-bottom:1px solid #d0d0d0;border-right:1px solid #c8c8c8;"></div>
<div style="left:5px;top:495px;width:2px;height:2px;background:#c6c6c6;"></div>
<div style="left:5px;top:499px;width:2px;height:2px;background:#c6c6c6;"></div>
<div style="left:5px;top:503px;width:2px;height:2px;background:#c6c6c6;"></div>
<div style="left:5px;top:507px;width:2px;height:2px;background:#c6c6c6;"></div>
<div style="left:5px;top:511px;width:2px;height:2px;background:#c6c6c6;"></div>
<div style="left:5px;top:515px;width:2px;height:2px;background:#c6c6c6;"></div>
<div style="left:26px;top:497px;width:49px;height:17px;background:#f4f4f4;border:1px solid #e2e2e2;border-radius:2px;"></div>
<div style="left:59px;top:498px;width:14px;height:15px;background:#ededed;"></div>
<svg class="i" style="left:63px;top:500.5px;" width="6" height="3" viewBox="0 0 6 3"><path d="M0 3H6L3 0Z" fill="#a8a8a8"/></svg>
<svg class="i" style="left:63px;top:507.5px;" width="6" height="3" viewBox="0 0 6 3"><path d="M0 0H6L3 3Z" fill="#a8a8a8"/></svg>
<div style="left:94px;top:497px;width:49px;height:17px;background:#f4f4f4;border:1px solid #e2e2e2;border-radius:2px;"></div>
<div style="left:127px;top:498px;width:14px;height:15px;background:#ededed;"></div>
<svg class="i" style="left:131px;top:500.5px;" width="6" height="3" viewBox="0 0 6 3"><path d="M0 3H6L3 0Z" fill="#a8a8a8"/></svg>
<svg class="i" style="left:131px;top:507.5px;" width="6" height="3" viewBox="0 0 6 3"><path d="M0 0H6L3 3Z" fill="#a8a8a8"/></svg>
<div style="left:184px;top:497px;width:49px;height:17px;background:#f4f4f4;border:1px solid #e2e2e2;border-radius:2px;"></div>
<div style="left:217px;top:498px;width:14px;height:15px;background:#ededed;"></div>
<svg class="i" style="left:221px;top:500.5px;" width="6" height="3" viewBox="0 0 6 3"><path d="M0 3H6L3 0Z" fill="#a8a8a8"/></svg>
<svg class="i" style="left:221px;top:507.5px;" width="6" height="3" viewBox="0 0 6 3"><path d="M0 0H6L3 3Z" fill="#a8a8a8"/></svg>
<div style="left:252px;top:497px;width:49px;height:17px;background:#f4f4f4;border:1px solid #e2e2e2;border-radius:2px;"></div>
<div style="left:285px;top:498px;width:14px;height:15px;background:#ededed;"></div>
<svg class="i" style="left:289px;top:500.5px;" width="6" height="3" viewBox="0 0 6 3"><path d="M0 3H6L3 0Z" fill="#a8a8a8"/></svg>
<svg class="i" style="left:289px;top:507.5px;" width="6" height="3" viewBox="0 0 6 3"><path d="M0 0H6L3 3Z" fill="#a8a8a8"/></svg>
<div style="left:324px;top:497px;width:49px;height:17px;background:#f4f4f4;border:1px solid #e2e2e2;border-radius:2px;"></div>
<div style="left:357px;top:498px;width:14px;height:15px;background:#ededed;"></div>
<svg class="i" style="left:361px;top:500.5px;" width="6" height="3" viewBox="0 0 6 3"><path d="M0 3H6L3 0Z" fill="#a8a8a8"/></svg>
<svg class="i" style="left:361px;top:507.5px;" width="6" height="3" viewBox="0 0 6 3"><path d="M0 0H6L3 3Z" fill="#a8a8a8"/></svg>
<div style="left:395px;top:497px;width:49px;height:17px;background:#f4f4f4;border:1px solid #e2e2e2;border-radius:2px;"></div>
<div style="left:428px;top:498px;width:14px;height:15px;background:#ededed;"></div>
<svg class="i" style="left:432px;top:500.5px;" width="6" height="3" viewBox="0 0 6 3"><path d="M0 3H6L3 0Z" fill="#a8a8a8"/></svg>
<svg class="i" style="left:432px;top:507.5px;" width="6" height="3" viewBox="0 0 6 3"><path d="M0 0H6L3 3Z" fill="#a8a8a8"/></svg>
<span class="t" style="left:10.5px;top:497.5px;line-height:13px;color:#111;font-family:'Liberation Sans','IPAGothic',sans-serif;font-size:13px;font-weight:normal;-webkit-text-stroke:0.2px currentColor;">(</span>
<span class="t" style="left:78.5px;top:499.0px;line-height:12px;color:#000;font-family:'Liberation Sans','IPAGothic',sans-serif;font-size:12px;font-weight:normal;-webkit-text-stroke:0.2px currentColor;">.</span>
<span class="t" style="left:151px;top:497.5px;line-height:13px;height:13px;color:#111;font-family:'Liberation Sans','IPAGothic',sans-serif;font-size:13px;font-weight:normal;-webkit-text-stroke:0.2px currentColor;"><span class="s" style="width:4px"><span style="transform:scaleX(0.9209);">)</span></span><span class="s" style="width:3px"><span style=""> </span></span><span class="s" style="width:6px"><span style="transform:scaleX(1.3813);">-</span></span><span class="s" style="width:4px"><span style=""> </span></span><span class="s" style="width:4px"><span style="transform:scaleX(0.9209);">(</span></span></span>
<span class="t" style="left:237.5px;top:499.0px;line-height:12px;color:#000;font-family:'Liberation Sans','IPAGothic',sans-serif;font-size:12px;font-weight:normal;-webkit-text-stroke:0.2px currentColor;">.</span>
<span class="t" style="left:309px;top:497.5px;line-height:13px;color:#111;font-family:'Liberation Sans','IPAGothic',sans-serif;font-size:13px;font-weight:normal;-webkit-text-stroke:0.2px currentColor;">)</span>
<span class="t" style="left:375.8px;top:494px;line-height:22px;color:#3a3a3a;font-family:'Liberation Sans','Noto Sans CJK JP',sans-serif;font-size:22px;font-weight:normal;">×</span>
<div style="left:0px;top:519px;width:960px;height:1px;background:#d4d4d4;"></div>
<div style="left:682px;top:520px;width:1px;height:18px;background:#d4d4d4;"></div>
<div style="left:942px;top:520px;width:1px;height:18px;background:#d4d4d4;"></div>
<span class="t" style="left:491px;top:523.5px;line-height:12.5px;height:12.5px;color:#222;font-family:'Liberation Sans','Noto Sans CJK JP',sans-serif;font-size:12.5px;font-weight:normal;"><span class="s" style="width:93px"><span style="transform:scaleX(0.9496);">VT3-W4M*/W4G*</span></span><span class="s" style="width:3.5px"><span style=""> </span></span><span class="s" style="width:20px"><span style="transform:scaleX(1.0684);"><span style="font-size:11.0px">ｸ<span style="margin-left:-0.2em;margin-right:-0.1em">ﾞ</span>ﾚｰ</span></span></span></span>
<span class="t" style="left:687px;top:523.5px;line-height:12.5px;height:12.5px;color:#222;font-family:'Liberation Sans','Noto Sans CJK JP',sans-serif;font-size:12.5px;font-weight:normal;"><span class="s" style="width:45px"><span style="transform:scaleX(0.7227);">キーエンス</span></span><span class="s" style="width:3px"><span style=""> </span></span><span class="s" style="width:41px"><span style="transform:scaleX(0.8547);">KV-7000</span></span><span class="s" style="width:26px"><span style="transform:scaleX(1.0735);"><span style="font-size:11.0px">ｼﾘｰｽ<span style="margin-left:-0.2em;margin-right:-0.1em">ﾞ</span></span></span></span><span class="s" style="width:5px"><span style=""> </span></span><span class="s" style="width:32.5px"><span style="transform:scaleX(1.0711);">(<span style="font-size:11.0px">ｼﾘｱﾙ</span>)</span></span><span class="s" style="width:37.5px"><span style="transform:scaleX(0.8996);">&lt;XYM&gt;</span></span></span>
<svg class="i" style="left:945px;top:526px;" width="13" height="13" viewBox="0 0 13 13"><rect x="6" y="6" width="2" height="2" fill="#b4b4b4"/><rect x="9.5" y="6" width="2" height="2" fill="#b4b4b4"/><rect x="2.5" y="9.5" width="2" height="2" fill="#b4b4b4"/><rect x="6" y="9.5" width="2" height="2" fill="#b4b4b4"/><rect x="9.5" y="9.5" width="2" height="2" fill="#b4b4b4"/></svg>
<span class="t" style="left:945.5px;top:523.5px;line-height:12.5px;color:#111;font-family:'Liberation Sans','Noto Sans CJK JP',sans-serif;font-size:12.5px;font-weight:normal;transform:scaleX(1.1600);">---</span>
<div style="left:0px;top:0px;width:960px;height:540px;border:1px solid #9a9a9a;border-radius:8px 8px 8px 8px;background:transparent;pointer-events:none;"></div>
<svg class="i" style="left:0px;top:0px;" width="8" height="8" viewBox="0 0 8 8"><path d="M0 0H8A8 8 0 0 0 0 8Z" fill="#fff"/></svg>
<svg class="i" style="left:952px;top:0px;" width="8" height="8" viewBox="0 0 8 8"><path d="M8 0H0A8 8 0 0 1 8 8Z" fill="#fff"/></svg>
<svg class="i" style="left:0px;top:532px;" width="8" height="8" viewBox="0 0 8 8"><path d="M0 8H8A8 8 0 0 1 0 0Z" fill="#fff"/></svg>
<svg class="i" style="left:952px;top:532px;" width="8" height="8" viewBox="0 0 8 8"><path d="M8 8H0A8 8 0 0 0 8 0Z" fill="#fff"/></svg>
</div></body></html>
